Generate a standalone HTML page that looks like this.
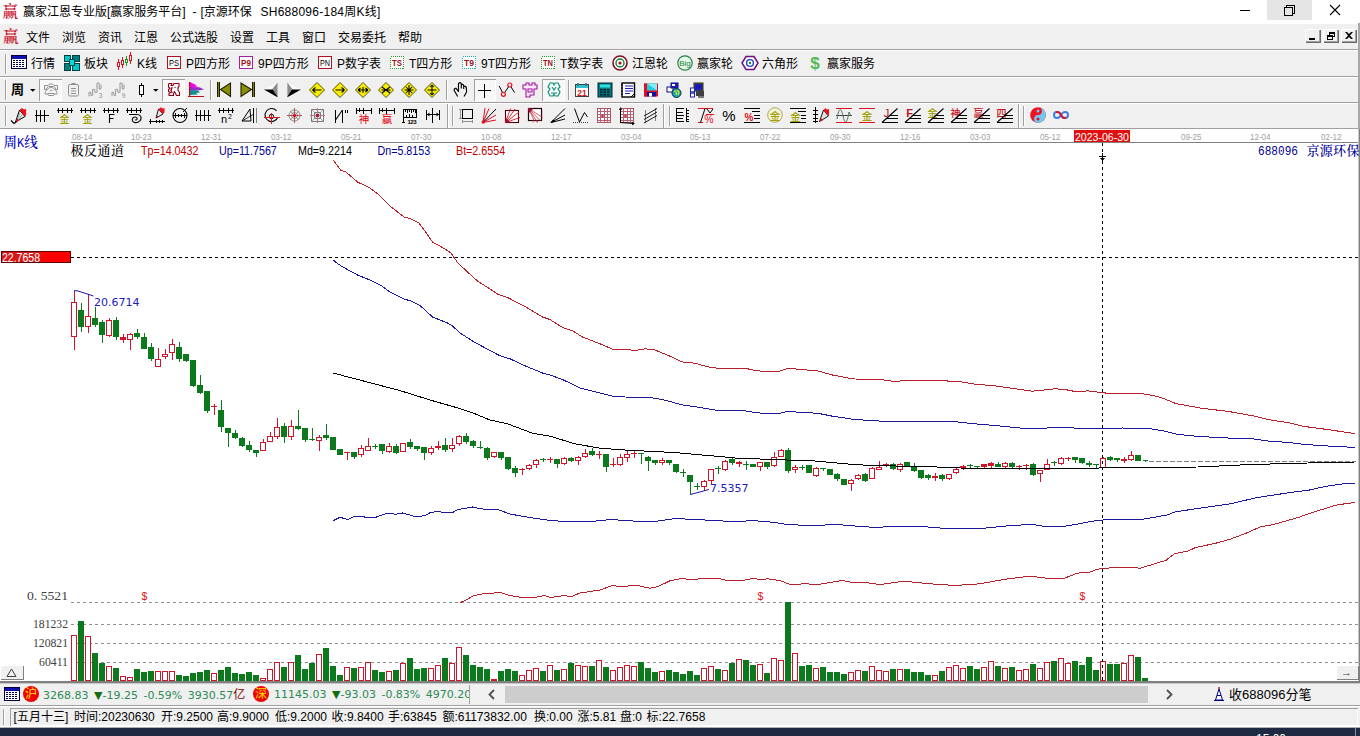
<!DOCTYPE html><html><head><meta charset="utf-8"><title>赢家江恩专业版</title><style>
html,body{margin:0;padding:0}
body{width:1360px;height:736px;overflow:hidden;background:#fff;position:relative;font-family:'Liberation Sans','Noto Sans CJK SC',sans-serif;font-size:12px;color:#000}
.a{position:absolute}
.t{position:absolute;white-space:nowrap;line-height:1}
.bar{position:absolute;left:0;width:1360px;background:#f0f0f0}
.ln{position:absolute;left:0;width:1360px;height:1px}
.ic{position:absolute;width:16px;height:16px;overflow:visible}
.grip{position:absolute;width:1px;background:#a0a0a0;box-shadow:1px 0 0 #fff}
.sep{position:absolute;width:1px;background:#a0a0a0;box-shadow:1px 0 0 #fff}
.pressed{position:absolute;background:#f8f8f8;box-shadow:inset 1px 1px 0 #a0a0a0,inset -1px -1px 0 #fff}

</style></head><body>
<div class="a" style="left:0;top:0;width:1360px;height:24px;background:#fff"></div>
<div class="t" style="left:2.5px;top:3px;font:600 15.5px/18px 'Liberation Serif','Noto Serif CJK SC',serif;color:#c8102a">赢</div>
<div class="t" id="title" style="left:23px;top:5px;font-size:12px;line-height:15px">赢家江恩专业版[赢家服务平台]<span class="t" style="left:169.500px;top:0;line-height:15px">-</span><span class="t" style="left:177.500px;top:0;line-height:15px">[京源环保</span><span class="t" id="t2" style="left:237.500px;top:0;line-height:15px;letter-spacing:0.25px">SH688096-184周K线]</span></div>
<div class="a" style="left:1267px;top:0;width:45px;height:20px;background:#e5e5e5"></div>
<svg class="a" style="left:1230px;top:0" width="130" height="22" viewBox="0 0 130 22"><g fill="none" stroke="#000" stroke-width="1" shape-rendering="crispEdges"><path d="M9.5 10.5h10"/><path d="M54.5 7.5h8v8h-8z M56.5 7.5v-2h8v8h-2"/></g><path d="M100 5l10 10M110 5l-10 10" stroke="#000" stroke-width="1.1" fill="none"/></svg>
<div class="bar" style="top:24px;height:25px"></div>
<div class="t" style="left:3px;top:28px;font:600 15.5px/18px 'Liberation Serif','Noto Serif CJK SC',serif;color:#c8102a">赢</div>
<div class="t" style="left:26px;top:31px;line-height:15px">文件</div>
<div class="t" style="left:62px;top:31px;line-height:15px">浏览</div>
<div class="t" style="left:98px;top:31px;line-height:15px">资讯</div>
<div class="t" style="left:134px;top:31px;line-height:15px">江恩</div>
<div class="t" style="left:170px;top:31px;line-height:15px">公式选股</div>
<div class="t" style="left:230px;top:31px;line-height:15px">设置</div>
<div class="t" style="left:266px;top:31px;line-height:15px">工具</div>
<div class="t" style="left:302px;top:31px;line-height:15px">窗口</div>
<div class="t" style="left:338px;top:31px;line-height:15px">交易委托</div>
<div class="t" style="left:398px;top:31px;line-height:15px">帮助</div>
<div class="a" style="left:1305px;top:29px;width:16px;height:14px;background:#f0f0f0;box-shadow:inset 1px 1px 0 #fff,inset -1px -1px 0 #696969,inset -2px -2px 0 #a0a0a0"></div>
<div class="a" style="left:1323px;top:29px;width:16px;height:14px;background:#f0f0f0;box-shadow:inset 1px 1px 0 #fff,inset -1px -1px 0 #696969,inset -2px -2px 0 #a0a0a0"></div>
<div class="a" style="left:1341px;top:29px;width:16px;height:14px;background:#f0f0f0;box-shadow:inset 1px 1px 0 #fff,inset -1px -1px 0 #696969,inset -2px -2px 0 #a0a0a0"></div>
<svg class="a" style="left:1305px;top:29px" width="52" height="14" viewBox="0 0 52 14" shape-rendering="crispEdges"><path d="M4 9h6v2h-6z" fill="#000"/><g fill="none" stroke="#000"><path d="M24.5 3.5h5v4h-5z M24 4.5h6"/><path d="M22.5 6.5h5v4h-5z M22 7.5h6" /></g><path d="M22.5 6.5h5v4h-5z" fill="#f0f0f0" stroke="#000"/><path d="M22 7.5h6" stroke="#000"/><path d="M40 3h2l2 2l2-2h2l-3 3.5l3 3.5h-2l-2-2l-2 2h-2l3-3.5z" fill="#000" shape-rendering="auto"/></svg>
<div class="ln" style="top:49px;background:#a0a0a0"></div><div class="ln" style="top:50px;background:#fff"></div>
<div class="bar" style="top:51px;height:25px"></div>
<div class="grip" style="left:5px;top:54px;height:20px"></div>
<svg class="ic" style="left:11px;top:55px" viewBox="0 0 16 16"><rect x="0.5" y="0.5" width="15" height="13" fill="#fff" stroke="#000040" shape-rendering="crispEdges"/><rect x="1" y="1" width="14" height="3" fill="#1010b0" shape-rendering="crispEdges"/><g fill="#000040" shape-rendering="crispEdges"><rect x="2" y="5" width="2" height="1"/><rect x="5" y="5" width="2" height="1"/><rect x="8" y="5" width="2" height="1"/><rect x="11" y="5" width="2" height="1"/><rect x="2" y="7" width="2" height="1"/><rect x="5" y="7" width="2" height="1"/><rect x="8" y="7" width="2" height="1"/><rect x="11" y="7" width="2" height="1"/><rect x="2" y="9" width="2" height="1"/><rect x="5" y="9" width="2" height="1"/><rect x="8" y="9" width="2" height="1"/><rect x="11" y="9" width="2" height="1"/><rect x="2" y="11" width="2" height="1"/><rect x="5" y="11" width="2" height="1"/><rect x="8" y="11" width="2" height="1"/><rect x="11" y="11" width="2" height="1"/></g></svg>
<div class="t" style="left:31px;top:57px;line-height:15px">行情</div>
<svg class="ic" style="left:64px;top:55px" viewBox="0 0 16 16"><g shape-rendering="crispEdges"><rect x="0.5" y="0.5" width="6" height="6" fill="#00c8c8" stroke="#004040"/><rect x="8.5" y="0.5" width="7" height="6" fill="#008080" stroke="#004040"/><rect x="0.5" y="8.5" width="6" height="7" fill="#008080" stroke="#004040"/><rect x="8.5" y="8.5" width="7" height="7" fill="#00c8c8" stroke="#004040"/><rect x="5" y="4" width="5" height="6" fill="#00e0e0" stroke="#004040"/></g></svg>
<div class="t" style="left:84px;top:57px;line-height:15px">板块</div>
<svg class="ic" style="left:116px;top:55px" viewBox="0 0 16 16"><g shape-rendering="crispEdges"><rect x="2" y="4" width="1" height="11" fill="#e01020"/><rect x="1.5" y="7.5" width="2" height="4" fill="#fff" stroke="#e01020"/><rect x="6" y="2" width="1" height="11" fill="#e01020"/><rect x="5.5" y="5.5" width="2" height="4" fill="#fff" stroke="#e01020"/><rect x="10" y="1" width="1" height="10" fill="#10a020"/><rect x="9.5" y="4.5" width="2" height="3" fill="#fff" stroke="#10a020"/><rect x="14" y="-3" width="1" height="12" fill="#e01020"/><rect x="13.5" y="0.5" width="2" height="5" fill="#fff" stroke="#e01020"/></g></svg>
<div class="t" style="left:137px;top:57px;line-height:15px">K线</div>
<svg class="ic" style="left:167px;top:55px" viewBox="0 0 16 16"><rect x="0.5" y="1.5" width="13" height="12" fill="#fff" stroke="#b01020" shape-rendering="crispEdges"/><text x="7" y="11" text-anchor="middle" font-family='"Liberation Sans","Noto Sans CJK SC",sans-serif' font-size="9.500" fill="#000" textLength="10" lengthAdjust="spacingAndGlyphs">PS</text></svg>
<div class="t" style="left:186px;top:57px;line-height:15px">P四方形</div>
<svg class="ic" style="left:239px;top:55px" viewBox="0 0 16 16"><rect x="0.5" y="1.5" width="13" height="12" fill="#fff" stroke="#a020a0" shape-rendering="crispEdges"/><text x="7" y="11" text-anchor="middle" font-family='"Liberation Sans","Noto Sans CJK SC",sans-serif' font-size="8.500" font-weight="bold" fill="#a01020" textLength="10" lengthAdjust="spacingAndGlyphs">P9</text></svg>
<div class="t" style="left:258px;top:57px;line-height:15px">9P四方形</div>
<svg class="ic" style="left:318px;top:55px" viewBox="0 0 16 16"><rect x="0.5" y="1.5" width="13" height="12" fill="#fff" stroke="#b01020" shape-rendering="crispEdges"/><text x="7" y="11" text-anchor="middle" font-family='"Liberation Sans","Noto Sans CJK SC",sans-serif' font-size="9.500" fill="#000" textLength="10" lengthAdjust="spacingAndGlyphs">PN</text></svg>
<div class="t" style="left:337px;top:57px;line-height:15px">P数字表</div>
<svg class="ic" style="left:390px;top:55px" viewBox="0 0 16 16"><rect x="0.5" y="1.5" width="13" height="12" fill="#fff" stroke="#20a020" stroke-dasharray="1 1" shape-rendering="crispEdges"/><text x="7" y="11" text-anchor="middle" font-family='"Liberation Sans","Noto Sans CJK SC",sans-serif' font-size="8.500" font-weight="bold" fill="#a01020" textLength="10" lengthAdjust="spacingAndGlyphs">TS</text></svg>
<div class="t" style="left:409px;top:57px;line-height:15px">T四方形</div>
<svg class="ic" style="left:462px;top:55px" viewBox="0 0 16 16"><rect x="0.5" y="1.5" width="13" height="12" fill="#fff" stroke="#20b0b0" stroke-dasharray="1 1" shape-rendering="crispEdges"/><text x="7" y="11" text-anchor="middle" font-family='"Liberation Sans","Noto Sans CJK SC",sans-serif' font-size="8.500" font-weight="bold" fill="#a01020" textLength="10" lengthAdjust="spacingAndGlyphs">T9</text></svg>
<div class="t" style="left:481px;top:57px;line-height:15px">9T四方形</div>
<svg class="ic" style="left:541px;top:55px" viewBox="0 0 16 16"><rect x="0.5" y="1.5" width="13" height="12" fill="#fff" stroke="#20a020" stroke-dasharray="1 1" shape-rendering="crispEdges"/><text x="7" y="11" text-anchor="middle" font-family='"Liberation Sans","Noto Sans CJK SC",sans-serif' font-size="8.500" font-weight="bold" fill="#a01020" textLength="10" lengthAdjust="spacingAndGlyphs">TN</text></svg>
<div class="t" style="left:560px;top:57px;line-height:15px">T数字表</div>
<svg class="ic" style="left:612px;top:55px" viewBox="0 0 16 16"><circle cx="8" cy="8" r="7" fill="#fff" stroke="#801020" stroke-width="1.6"/><circle cx="8" cy="8" r="4" fill="none" stroke="#108030" stroke-width="1.4"/><circle cx="8" cy="8" r="1.6" fill="#a01020"/></svg>
<div class="t" style="left:632px;top:57px;line-height:15px">江恩轮</div>
<svg class="ic" style="left:677px;top:55px" viewBox="0 0 16 16"><circle cx="8" cy="8" r="7.2" fill="#e8f8e8" stroke="#208040" stroke-width="1.2"/><text x="8" y="11" text-anchor="middle" font-family='"Liberation Sans","Noto Sans CJK SC",sans-serif' font-size="8" fill="#208040">Big</text></svg>
<div class="t" style="left:697px;top:57px;line-height:15px">赢家轮</div>
<svg class="ic" style="left:742px;top:55px" viewBox="0 0 16 16"><path d="M4 1.5h8l4 6.5l-4 6.5h-8l-4-6.5z" fill="#fff" stroke="#701080" stroke-width="1.5"/><circle cx="8" cy="8" r="3.4" fill="none" stroke="#2040c0" stroke-width="1.4"/><circle cx="8" cy="8" r="1.2" fill="#208040"/></svg>
<div class="t" style="left:762px;top:57px;line-height:15px">六角形</div>
<svg class="ic" style="left:807px;top:55px" viewBox="0 0 16 16"><text x="8" y="14" text-anchor="middle" font-family='"Liberation Sans","Noto Sans CJK SC",sans-serif' font-size="17" font-weight="bold" fill="#58b858">$</text></svg>
<div class="t" style="left:827px;top:57px;line-height:15px">赢家服务</div>
<div class="ln" style="top:76px;background:#a0a0a0"></div><div class="ln" style="top:77px;background:#fff"></div>
<div class="bar" style="top:78px;height:24px"></div>
<div class="grip" style="left:5px;top:80px;height:20px"></div>
<div class="t" style="left:11px;top:82px;font:bold 13px/16px 'Liberation Sans','Noto Sans CJK SC',sans-serif">周</div>
<svg class="a" style="left:30px;top:89px" width="6" height="4"><path d="M0 0h5.500l-2.750 2.750z" fill="#000"/></svg>
<div class="pressed" style="left:39px;top:79px;width:23px;height:22px"></div>
<div class="pressed" style="left:162px;top:79px;width:23px;height:22px"></div>
<div class="pressed" style="left:474px;top:79px;width:22px;height:22px"></div>
<div class="pressed" style="left:542px;top:79px;width:23px;height:22px"></div>
<svg class="a" style="left:153px;top:89px" width="6" height="4"><path d="M0 0h5.500l-2.750 2.750z" fill="#000"/></svg>
<svg class="ic" style="left:43px;top:82px" viewBox="0 0 16 16"><path d="M1.500 3.500h3.500l1.500-1.500h3l1.500 1.500h3.500v4h-2v-1.500l-2-1.500h-5l-2 1.500v1.500h-2z M5 7c1-2 5-2 6 0c2 1 3 3 3 5h-2.500l-1 1.500h-5l-1-1.500h-2.500c0-2 1-4 3-5z M6.500 9c1-1 2-1 3 0M4.500 11.500h7" fill="none" stroke="#909090" stroke-width="1"/></svg>
<svg class="ic" style="left:65px;top:82px" viewBox="0 0 16 16"><rect x="3.500" y="2.500" width="10" height="11.500" rx="1.500" fill="none" stroke="#909090"/><path d="M6.500 2h4v-1h-4z" fill="#909090"/><path d="M6 6.500h5M6 9h5M6 11.500h5" stroke="#909090"/></svg>
<svg class="ic" style="left:87px;top:82px" viewBox="0 0 16 16"><polyline points="2,14.400 2,10.300 3.800,10.300 3.800,13.300 5.600,13.300 5.600,7.400 7.800,7.400 7.800,10.300 10,10.300 10,1.100 12.200,1.100 12.200,7 14,7 14,2.600" fill="none" stroke="#999" stroke-width="1"/><text x="13.500" y="16" text-anchor="middle" font-family='"Liberation Sans","Noto Sans CJK SC",sans-serif' font-size="6.500" fill="#909090">3</text></svg>
<svg class="ic" style="left:110px;top:82px" viewBox="0 0 16 16"><polyline points="2,14.400 2,10.300 3.800,10.300 3.800,13.300 5.600,13.300 5.600,7.400 7.800,7.400 7.800,10.300 10,10.300 10,1.100 12.200,1.100 12.200,7 14,7 14,2.600" fill="none" stroke="#999" stroke-width="1"/><text x="13.500" y="16" text-anchor="middle" font-family='"Liberation Sans","Noto Sans CJK SC",sans-serif' font-size="6.500" fill="#909090">9</text></svg>
<svg class="ic" style="left:134px;top:82px" viewBox="0 0 16 16"><g shape-rendering="crispEdges"><rect x="7" y="1" width="1" height="14" fill="#000"/><rect x="5.500" y="3.500" width="4" height="9" fill="#fff" stroke="#000" stroke-width="1"/></g></svg>
<svg class="ic" style="left:165px;top:82px" viewBox="0 0 16 16"><path d="M4 1.500h3l-1 2h2l1-2h5v3l-1 1v3l1.500 2v3h-3l-1-2l-1-2l-1 2v2h-4.500v-2l1.500-1l-2-1v-2l1.500-1l-1.500-1.500v-2z" fill="#fff" stroke="#900018" stroke-width="1.100" stroke-linejoin="round"/><path d="M7 5.500l-1 3l1 2M10 5.500v.1" fill="none" stroke="#900018" stroke-width="1.300" stroke-linecap="round"/></svg>
<svg class="ic" style="left:188px;top:82px" viewBox="0 0 16 16"><path d="M2 0L9 3.500L7 4L12 5.500L2 6z" fill="#ff00e0"/><path d="M2 5L12 5.500L16 7.500L10 8.500L2 9z" fill="#9030c8"/><path d="M2 8.500L10 8.500L12 10.500L8 11L10 12.500L2 13z" fill="#109090"/><path d="M1.600 0V15M0 14.500H16" stroke="#c01020" stroke-width="1.200" fill="none"/></svg>
<svg class="ic" style="left:216px;top:82px" viewBox="0 0 16 16"><rect x="1" y="0" width="3" height="15" fill="#202000"/><rect x="2" y="0" width="1" height="15" fill="#808000"/><path d="M14.500 1v13.500L4.500 7.500z" fill="#8c8c08" stroke="#202000" stroke-width="1.100"/></svg>
<svg class="ic" style="left:239px;top:82px" viewBox="0 0 16 16"><rect x="13" y="0" width="3" height="15" fill="#202000"/><rect x="14" y="0" width="1" height="15" fill="#808000"/><path d="M2 1v13.500L12.500 7.500z" fill="#8c8c08" stroke="#202000" stroke-width="1.100"/></svg>
<svg class="ic" style="left:263px;top:82px" viewBox="0 0 16 16"><path d="M0.900 7.400L14.500 .4L9 7.400z" fill="#fafafa"/><path d="M9 7.400L14.500 .4V14.400z" fill="#8c8c8c"/><path d="M0.900 7.400H9.500L14.500 14.400v.8z" fill="#000"/></svg>
<svg class="ic" style="left:286px;top:82px" viewBox="0 0 16 16"><path d="M15 7.400L1.400 .4L6.600 7.400z" fill="#fafafa"/><path d="M6.600 7.400L1.400 .4V14.400z" fill="#8c8c8c"/><path d="M15 7.400H6L1.400 14.400v.8z" fill="#000"/></svg>
<svg class="ic" style="left:309px;top:82px" viewBox="0 0 16 16"><path d="M8 .5L15.500 8L8 15.500L.5 8z" fill="#f8f000" stroke="#404000" stroke-width=".9"/><path d="M3.500 8h9M3.500 8l3-2.500M3.500 8l3 2.500" stroke="#000" stroke-width="1.050" fill="none"/></svg>
<svg class="ic" style="left:332px;top:82px" viewBox="0 0 16 16"><path d="M8 .5L15.500 8L8 15.500L.5 8z" fill="#f8f000" stroke="#404000" stroke-width=".9"/><path d="M3.500 8h9M12.500 8l-3-2.500M12.500 8l-3 2.500" stroke="#000" stroke-width="1.050" fill="none"/></svg>
<svg class="ic" style="left:355px;top:82px" viewBox="0 0 16 16"><path d="M8 .5L15.500 8L8 15.500L.5 8z" fill="#f8f000" stroke="#404000" stroke-width=".9"/><path d="M3 8h10M3 8l2.500-2M3 8l2.500 2M13 8l-2.500-2M13 8l-2.500 2M8 5v6" stroke="#000" stroke-width="1.050" fill="none"/></svg>
<svg class="ic" style="left:378px;top:82px" viewBox="0 0 16 16"><path d="M8 .5L15.500 8L8 15.500L.5 8z" fill="#f8f000" stroke="#404000" stroke-width=".9"/><path d="M4 5l8 6M4 11l8-6M3.500 8h9" stroke="#000" stroke-width="1.050" fill="none"/></svg>
<svg class="ic" style="left:401px;top:82px" viewBox="0 0 16 16"><path d="M8 .5L15.500 8L8 15.500L.5 8z" fill="#f8f000" stroke="#404000" stroke-width=".9"/><path d="M8 3v10M3.500 8h9M5 5l6 6M5 11l6-6" stroke="#000" stroke-width="1.050" fill="none"/></svg>
<svg class="ic" style="left:424px;top:82px" viewBox="0 0 16 16"><path d="M8 .5L15.500 8L8 15.500L.5 8z" fill="#f8f000" stroke="#404000" stroke-width=".9"/><path d="M8 3v10M3.500 8h9M8 3l-2 2M8 3l2 2M8 13l-2-2M8 13l2-2" stroke="#000" stroke-width="1.050" fill="none"/></svg>
<svg class="ic" style="left:453px;top:82px" viewBox="0 0 16 16"><path d="M4.700 14.500L1.200 8.500V7L2.900 6.200L5.500 9.500V1.500L7 .5L8.300 1.500V6.500M8.300 3L9.500 2.300L10.700 3.300V7M10.700 4.700L12 4.200L13.300 5.300L13.600 10L11 14.500" fill="none" stroke="#000" stroke-width="1.150" stroke-linejoin="round"/></svg>
<svg class="ic" style="left:477px;top:82px" viewBox="0 0 16 16"><path d="M7.500 2v14M1 8.500h13" stroke="#000" stroke-width="1" shape-rendering="crispEdges"/></svg>
<svg class="ic" style="left:499px;top:82px" viewBox="0 0 16 16"><path d="M.2 4l4.200 8.300l6.400-9.300l4.800 7.600" fill="none" stroke="#000" stroke-width="1"/><circle cx="4.400" cy="12.300" r="2" fill="#f0f0f0" stroke="#e01020" stroke-width="1.200"/><circle cx="10.800" cy="3" r="2" fill="#f0f0f0" stroke="#e01020" stroke-width="1.200"/></svg>
<svg class="ic" style="left:522px;top:82px" viewBox="0 0 16 16"><path d="M1 3h3v-2h3v2h3v-2h3v2h2v4h-3v6h-4v2h-4v-8h-3z M6 7h4v3h-4z" fill="#fbe8fb" stroke="#a010a0" stroke-width="1.050"/></svg>
<svg class="ic" style="left:546px;top:82px" viewBox="0 0 16 16"><path d="M4 1h3l1 2l1-2h3l2 4l-2 2l2 3l-2 4h-3l-1-2l-1 2h-3l-2-4l2-3l-2-2z M6 5l2 3l2-3M5 11h6" fill="none" stroke="#109080" stroke-width="1.200"/></svg>
<svg class="ic" style="left:574px;top:82px" viewBox="0 0 16 16"><rect x="1.500" y="2.500" width="13" height="12" fill="#fff" stroke="#404040"/><rect x="2" y="3" width="12" height="3" fill="#30c0d0"/><path d="M4 1v3M12 1v3" stroke="#208090" stroke-width="1.500"/><text x="8" y="13.500" text-anchor="middle" font-family='"Liberation Sans","Noto Sans CJK SC",sans-serif' font-size="8.500" font-weight="bold" fill="#d02020">21</text></svg>
<svg class="ic" style="left:597px;top:82px" viewBox="0 0 16 16"><rect x="1" y="1" width="14" height="14" fill="#087880" stroke="#002030"/><rect x="3" y="2.500" width="10" height="3" fill="#30e0e0"/><g fill="#002030"><rect x="3" y="7" width="2.500" height="1.600"/><rect x="6.5" y="7" width="2.500" height="1.600"/><rect x="10" y="7" width="2.500" height="1.600"/><rect x="3" y="9.5" width="2.500" height="1.600"/><rect x="6.5" y="9.5" width="2.500" height="1.600"/><rect x="10" y="9.5" width="2.500" height="1.600"/><rect x="3" y="12" width="2.500" height="1.600"/><rect x="6.5" y="12" width="2.500" height="1.600"/><rect x="10" y="12" width="2.500" height="1.600"/></g></svg>
<svg class="ic" style="left:620px;top:82px" viewBox="0 0 16 16"><rect x="2" y="1" width="12.500" height="14" fill="#fff" stroke="#000" stroke-width="1.400"/><path d="M5 4h8M5 6.500h8M5 9h8M5 11.500h5" stroke="#2020c0" stroke-width="1.100"/><path d="M1 3h2M1 6h2M1 9h2M1 12h2" stroke="#000"/><path d="M11 15l3.500-3.500" stroke="#000"/></svg>
<svg class="ic" style="left:643px;top:82px" viewBox="0 0 16 16"><rect x="1" y="1.500" width="14" height="13" fill="#e01020"/><rect x="4" y="1.500" width="10" height="7" fill="#20d0e0"/><path d="M4 1.500l10 7v-7z" fill="#80f0f0"/><rect x="1" y="1.500" width="3" height="13" fill="#e01020"/><rect x="4" y="10" width="9" height="4.500" fill="#1010a0"/><rect x="6" y="11" width="3" height="3.500" fill="#fff"/></svg>
<svg class="ic" style="left:666px;top:82px" viewBox="0 0 16 16"><rect x="1" y="5" width="6" height="5" fill="#fff" stroke="#101080"/><rect x="5" y="1" width="7" height="5" fill="#2020c0" stroke="#101080"/><rect x="6" y="2" width="3" height="2" fill="#fff"/><circle cx="10.500" cy="11" r="4.500" fill="#20a0c0" stroke="#003040"/><path d="M8 9c2 0 3 2 2 4M11 8l2 2l-1 3" fill="none" stroke="#c0e020" stroke-width="1.400"/></svg>
<svg class="ic" style="left:689px;top:82px" viewBox="0 0 16 16"><rect x="5" y="1" width="9" height="8" fill="#2020c0" stroke="#505000" stroke-width="1.200"/><rect x="6.500" y="2.500" width="6" height="4" fill="#1818b0"/><rect x="7" y="9" width="8" height="5" fill="#404040"/><rect x="1.500" y="6" width="4" height="9" fill="#fff" stroke="#2020a0"/><rect x="2" y="9" width="3" height="3" fill="#4060e0"/><path d="M9 15h6" stroke="#000"/></svg>
<div class="sep" style="left:210px;top:80px;height:20px"></div>
<div class="sep" style="left:446px;top:80px;height:20px"></div>
<div class="sep" style="left:568px;top:80px;height:20px"></div>
<div class="ln" style="top:102px;background:#a0a0a0"></div><div class="ln" style="top:103px;background:#fff"></div>
<div class="bar" style="top:104px;height:24px"></div>
<div class="grip" style="left:5px;top:106px;height:20px"></div>
<svg class="ic" style="left:11px;top:107px" viewBox="0 0 16 16"><path d="M8.500 3L14 9.500L4.500 15z" fill="#e8e8e8" stroke="#000" stroke-width="1"/><path d="M9 6l-2.500 6M11 7.500l-3.500 5.500" stroke="#70a090" stroke-width=".8"/><path d="M8.500 3L11 1L13 2.500L15 2L15.200 8L14 9.500z" fill="#f01020"/><path d="M4.500 15l1.800-3.500l2 2z" fill="#d01020"/><path d="M0 13.500l3 3l2.500-1.800" fill="none" stroke="#000" stroke-width="1.200"/></svg>
<svg class="ic" style="left:34px;top:107px" viewBox="0 0 16 16"><path d="M1 8.500h14M2.500 3v12M6.500 3v12M10.500 3v12" stroke="#000" stroke-width="1" fill="none" shape-rendering="crispEdges"/></svg>
<svg class="ic" style="left:57px;top:107px" viewBox="0 0 16 16"><path d="M0 3.500h16M1.500 1v5M5.500 1v5M10.500 1v5M14.500 1v5" stroke="#000" stroke-width="1" shape-rendering="crispEdges"/><text x="7.500" y="16" text-anchor="middle" font-family='"Liberation Sans","Noto Sans CJK SC",sans-serif' font-size="10" font-weight="500" fill="#a0a000">金</text></svg>
<svg class="ic" style="left:80px;top:107px" viewBox="0 0 16 16"><path d="M0 3.500h16M1.500 1v5M5.500 1v5M10.500 1v5M14.500 1v5" stroke="#000" stroke-width="1" shape-rendering="crispEdges"/><text x="7.500" y="16" text-anchor="middle" font-family='"Liberation Sans","Noto Sans CJK SC",sans-serif' font-size="10" font-weight="500" fill="#a0a000">金</text></svg>
<svg class="ic" style="left:103px;top:107px" viewBox="0 0 16 16"><path d="M0 3.500h16M1.500 1v5M5.500 1v5M10.500 1v5M14.500 1v5" stroke="#000" stroke-width="1" shape-rendering="crispEdges"/><path d="M6.500 16v-8.500h5M6.500 11.500h4" stroke="#000" stroke-width="1.100" fill="none"/></svg>
<svg class="ic" style="left:126px;top:107px" viewBox="0 0 16 16"><path d="M0 3.500h16M1.500 1v5M5.500 1v5M10.500 1v5M14.500 1v5" stroke="#000" stroke-width="1" shape-rendering="crispEdges"/><path d="M3 7.500h8c3.500 0 4.500 2.500 4 4.500c-.7 3-5 4.500-7.500 3c-2-1.300-1.500-4 .5-4.800c2-.7 3.500 .5 3 2c-.4 1-1.500 1-2 .5" fill="none" stroke="#000" stroke-width="1.100"/></svg>
<svg class="ic" style="left:149px;top:107px" viewBox="0 0 16 16"><path d="M9.500 2L14 7L7 11z" fill="#e8e8e8" stroke="#000" stroke-width=".9"/><path d="M9.500 2L12 .3L13.500 1.500L15.500 1L15.500 5.500L14 7z" fill="#f01020"/><path d="M7 11l1.300-2.600l1.500 1.500z" fill="#d01020"/><path d="M0 14.500h16M1.500 12v5M7.500 13v3M10.500 13v3M13.500 13v3" stroke="#000" stroke-width="1" shape-rendering="crispEdges"/></svg>
<svg class="ic" style="left:172px;top:107px" viewBox="0 0 16 16"><circle cx="8" cy="8.500" r="7" fill="none" stroke="#000" stroke-width="1.100"/><path d="M1 8.500h14M3.500 6v5M6.500 7v3M9.500 7v3M12.500 6v5" stroke="#000" shape-rendering="crispEdges"/><path d="M11 5l4-4" stroke="#000"/></svg>
<svg class="ic" style="left:195px;top:107px" viewBox="0 0 16 16"><path d="M0 8.500h16M1.500 3v11M5.500 3v11M9.500 3v11M13.500 3v11" stroke="#000" stroke-width="1" fill="none" shape-rendering="crispEdges"/></svg>
<svg class="ic" style="left:218px;top:107px" viewBox="0 0 16 16"><path d="M0 3.500h16M1.500 1v5M5.500 1v5M10.500 1v5M14.500 1v5" stroke="#000" stroke-width="1" shape-rendering="crispEdges"/><text x="6" y="16" text-anchor="middle" font-family='"Liberation Sans","Noto Sans CJK SC",sans-serif' font-size="11" fill="#000">n</text><text x="12" y="12" text-anchor="middle" font-family='"Liberation Sans","Noto Sans CJK SC",sans-serif' font-size="7" fill="#000">2</text></svg>
<svg class="ic" style="left:241px;top:107px" viewBox="0 0 16 16"><path d="M1 14L9 2l1 12z" fill="none" stroke="#000"/><path d="M12.500 1v15" stroke="#000" shape-rendering="crispEdges"/><path d="M15.500 1v15" stroke="#808080" shape-rendering="crispEdges"/><path d="M1 14l12-7" stroke="#000" stroke-width=".8"/></svg>
<svg class="ic" style="left:264px;top:107px" viewBox="0 0 16 16"><path d="M12.500 3.800A6.500 6.500 0 1 0 13.800 10" fill="none" stroke="#000" stroke-width="1.100"/><circle cx="7.500" cy="9.500" r="2.200" fill="none" stroke="#000" stroke-width="1"/><path d="M0 10.500h16M7.500 6v11" stroke="#e01020" stroke-width="1" shape-rendering="crispEdges"/></svg>
<svg class="ic" style="left:287px;top:107px" viewBox="0 0 16 16"><circle cx="7.500" cy="8.500" r="5.500" fill="none" stroke="#508868" stroke-width=".8"/><circle cx="7.500" cy="8.500" r="3" fill="none" stroke="#508868" stroke-width=".8"/><path d="M0 8.500h15M7.500 1v15" stroke="#d04858" stroke-width="1" shape-rendering="crispEdges"/><path d="M3 4l9 9M3 13l9-9" stroke="#c06070" stroke-width=".7"/><circle cx="7.500" cy="8.500" r="1.600" fill="#d01030"/></svg>
<svg class="ic" style="left:310px;top:107px" viewBox="0 0 16 16"><rect x="1.500" y="2.500" width="12" height="12" fill="none" stroke="#708078" stroke-width="1" shape-rendering="crispEdges"/><rect x="4.500" y="5.500" width="6" height="6" fill="none" stroke="#708078" stroke-width="1" shape-rendering="crispEdges"/><path d="M0 8.500h15M7.500 1v15" stroke="#c07080" stroke-width="1" shape-rendering="crispEdges"/><path d="M1 2l13 13M1 15l13-13" stroke="#a09090" stroke-width=".7"/><rect x="6" y="7" width="3" height="3" fill="#a02040"/></svg>
<svg class="ic" style="left:333px;top:107px" viewBox="0 0 16 16"><path d="M2.500 2.500v13M9.500 2.500v13" stroke="#000" stroke-width="1" shape-rendering="crispEdges"/><path d="M2.500 13L9.500 3" stroke="#000" stroke-width="1.100"/><path d="M12.500 2.500v3M14.500 2.500v3" stroke="#000" stroke-width="1" shape-rendering="crispEdges"/></svg>
<svg class="ic" style="left:356px;top:107px" viewBox="0 0 16 16"><path d="M0 3.500h16M0.500 1v6M3.500 1v4M7.500 1v6M15.500 1v6" stroke="#000" stroke-width="1" shape-rendering="crispEdges"/><text x="8" y="16.300" text-anchor="middle" font-family='"Liberation Sans","Noto Sans CJK SC",sans-serif' font-size="10.500" fill="#e00010">神</text></svg>
<svg class="ic" style="left:379px;top:107px" viewBox="0 0 16 16"><path d="M0 3.500h16M0.500 1v6M3.500 1v4M7.500 1v6M15.500 1v6" stroke="#000" stroke-width="1" shape-rendering="crispEdges"/><text x="8" y="16.300" text-anchor="middle" font-family='"Liberation Sans","Noto Sans CJK SC",sans-serif' font-size="10.500" fill="#e00010">赢</text></svg>
<svg class="ic" style="left:402px;top:107px" viewBox="0 0 16 16"><path d="M1 2.500h14M1 10.500h14M1.500 2v14M14.500 2v9M3.500 3v2M5.500 3v3M7.500 3v2M9.500 3v3M11.500 3v2M13.500 3v3M4.500 8v2M7.500 7v3M10.500 8v2M0 15.500h3" stroke="#000" stroke-width="1" shape-rendering="crispEdges" fill="none"/><text x="10" y="16.500" text-anchor="middle" font-family='"Liberation Sans","Noto Sans CJK SC",sans-serif' font-size="6" font-weight="bold" fill="#000" textLength="9">123</text></svg>
<svg class="ic" style="left:425px;top:107px" viewBox="0 0 16 16"><path d="M1.500 3v10M14.500 3v10M7.500 1v15M2 7.500h12" stroke="#000" stroke-width="1" shape-rendering="crispEdges"/><path d="M2 7.500l2.500-2v4zM14 7.500l-2.500-2v4z" fill="#000"/></svg>
<div class="sep" style="left:447px;top:104px;height:24px"></div>
<div class="grip" style="left:452px;top:106px;height:20px"></div>
<svg class="ic" style="left:458px;top:107px" viewBox="0 0 16 16"><rect x="4.500" y="2.500" width="10" height="9" fill="none" stroke="#000" stroke-width="1" shape-rendering="crispEdges"/><path d="M2.500 2v10M1 2.500h3M1 11.500h3M4 14.500h11M4.500 13v3M14.500 13v3" stroke="#909090" shape-rendering="crispEdges"/></svg>
<svg class="ic" style="left:481px;top:107px" viewBox="0 0 16 16"><path d="M2 15.500L4 1M2 15.500L8 1.500M2 15.500L15 8M2 15.500L15 13" stroke="#e01020" stroke-width="1"/><path d="M2 15.500L15 2" stroke="#000" stroke-width="1"/><circle cx="2.300" cy="15" r="1.700" fill="#e01020"/></svg>
<svg class="ic" style="left:504px;top:107px" viewBox="0 0 16 16"><rect x="1.500" y="3.500" width="13" height="12" fill="#fff" stroke="#500010" stroke-width="1.100"/><path d="M1.500 15.500l5-14M1.500 15.500l9.500-13.500M1.500 15.500l13.500-10.500M1.500 15.500l14.500-5" stroke="#e01020" stroke-width=".9"/><path d="M1.500 15.500v-5l5 5z" fill="#a01030"/></svg>
<svg class="ic" style="left:527px;top:107px" viewBox="0 0 16 16"><rect x="1.500" y="1.500" width="13" height="12" fill="#fff" stroke="#200008" stroke-width="1.200"/><path d="M1.500 1.500l9 14M1.500 1.500l12 12.500M1.500 1.500l14 9M1.500 1.500l6 13" stroke="#c03040" stroke-width=".8"/><path d="M14.500 5h1.500M14.500 9h1.500M6 13.500v2M10 13.500v2" stroke="#c03040" stroke-width=".8" stroke-dasharray="1 .6"/><path d="M1.500 1.500h5l-5 5z" fill="#a01030"/></svg>
<svg class="ic" style="left:550px;top:107px" viewBox="0 0 16 16"><path d="M1 15.500L15 1.500M1 15.500l14-7.500M1 15.500l14-3.500" stroke="#000" stroke-width="1"/><path d="M.5 16l4.500-1.500l-2-2z" fill="#000"/></svg>
<svg class="ic" style="left:573px;top:107px" viewBox="0 0 16 16"><path d="M1.500 1.500l5 13.500l5-9.500l3 4.500" fill="none" stroke="#000" stroke-width="1"/><path d="M0 15.500h16" stroke="#404040" stroke-dasharray="1 1"/></svg>
<svg class="ic" style="left:596px;top:107px" viewBox="0 0 16 16"><rect x="1.500" y="1.500" width="13" height="14" fill="#fff" stroke="#a85060" stroke-width="1" shape-rendering="crispEdges"/><path d="M1 4.500h14M1 7.500h14M1 10.500h14M1 13.500h14M4.500 1v15M8.500 1v15M11.500 1v15" stroke="#b86070" stroke-width="1" shape-rendering="crispEdges"/><circle cx="6.500" cy="9" r="1.300" fill="#c03048"/></svg>
<svg class="ic" style="left:619px;top:107px" viewBox="0 0 16 16"><rect x="1.500" y="1.500" width="13" height="14" fill="#fff" stroke="#a85060" stroke-width="1" shape-rendering="crispEdges"/><path d="M1 4.500h14M1 7.500h14M1 10.500h14M1 13.500h14M4.500 1v15M8.500 1v15M11.500 1v15" stroke="#b86070" stroke-width="1" shape-rendering="crispEdges"/><circle cx="6.500" cy="9" r="1.300" fill="#c03048"/><path d="M1.500 1v15" stroke="#000" stroke-width="1" shape-rendering="crispEdges"/><path d="M1 15.500l14 1" stroke="#000" stroke-width="1.100" fill="none"/><path d="M1.500 0l-1.500 3h3zM16 16.700l-3-2v3.500z" fill="#000"/></svg>
<svg class="ic" style="left:642px;top:107px" viewBox="0 0 16 16"><path d="M3.500 3v13M13.500 1v13" stroke="#808080" shape-rendering="crispEdges"/><path d="M2 9L15 1.500M2 12.500L15 5M2 16L15 8.500" stroke="#000" stroke-width=".9"/></svg>
<div class="sep" style="left:663px;top:104px;height:24px"></div>
<div class="grip" style="left:669px;top:106px;height:20px"></div>
<svg class="ic" style="left:675px;top:107px" viewBox="0 0 16 16"><path d="M1.500 1v14M1 1.500h8M1 5.500h7M1 8.500h8M1 11.500h7M1 14.500h8M11.500 1v14" stroke="#000" stroke-width="1" shape-rendering="crispEdges"/><path d="M12 3h2M12 6h2M12 9h2M12 12h2M12 14.500h2" stroke="#000" shape-rendering="crispEdges"/></svg>
<svg class="ic" style="left:698px;top:107px" viewBox="0 0 16 16"><path d="M0 1.500h15" stroke="#e01020" stroke-width="1" shape-rendering="crispEdges"/><path d="M0 15.500h5M8 7.500h8" stroke="#e01020" stroke-width="1" shape-rendering="crispEdges"/><path d="M2.500 15.500L7 1.500M8.500 1.500l3.500 4.500l3-4" fill="none" stroke="#000" stroke-width="1"/><text x="11" y="16" text-anchor="middle" font-family='"Liberation Sans","Noto Sans CJK SC",sans-serif' font-size="10.500" fill="#e01020">%</text></svg>
<svg class="ic" style="left:721px;top:107px" viewBox="0 0 16 16"><text x="8" y="14" text-anchor="middle" font-family='"Liberation Sans","Noto Sans CJK SC",sans-serif' font-size="15" fill="#000">%</text></svg>
<svg class="ic" style="left:744px;top:107px" viewBox="0 0 16 16"><path d="M0 1.500h16M8 4.500h8M10 8.500h6M10 11.500h6M0 15.500h16" stroke="#000" stroke-width="1.100" shape-rendering="crispEdges"/><path d="M0 15.500h16" stroke="#000"/><text x="5" y="13.500" text-anchor="middle" font-family='"Liberation Sans","Noto Sans CJK SC",sans-serif' font-size="10" font-weight="bold" fill="#e01020">%</text></svg>
<svg class="ic" style="left:767px;top:107px" viewBox="0 0 16 16"><circle cx="8" cy="8" r="7.300" fill="#f4f4d8" stroke="#b0a860" stroke-width="1"/><text x="8" y="12.500" text-anchor="middle" font-family='"Liberation Sans","Noto Sans CJK SC",sans-serif' font-size="10.500" font-weight="500" fill="#a0a000">金</text></svg>
<svg class="ic" style="left:790px;top:107px" viewBox="0 0 16 16"><path d="M0 1.500h16M8 4.500h8M11 8.500h5M11 11.500h5M0 15.500h16" stroke="#000" stroke-width="1.100" shape-rendering="crispEdges"/><text x="5.500" y="14" text-anchor="middle" font-family='"Liberation Sans","Noto Sans CJK SC",sans-serif' font-size="10.500" font-weight="500" fill="#a0a000">金</text></svg>
<svg class="ic" style="left:813px;top:107px" viewBox="0 0 16 16"><path d="M2.500 0v16M0 3.500h5M0 7.500h5M0 11.500h5M0 14.500h5" stroke="#000" stroke-width="1" shape-rendering="crispEdges"/><path d="M10.500 3L15.500 9L6.500 14.500z" fill="#e0e0e0" stroke="#000" stroke-width=".9"/><path d="M10.500 3L12.500 1L14 2.500L16 2L16 8L15.500 9z" fill="#f01020"/><path d="M6.500 14.500l1.700-3.300l2 2z" fill="#d01020"/></svg>
<svg class="ic" style="left:836px;top:107px" viewBox="0 0 16 16"><path d="M0 1.500h16M0 15.500h16" stroke="#e01020" stroke-width="1.200" shape-rendering="crispEdges"/><path d="M0 8.500h16" stroke="#404040" shape-rendering="crispEdges"/><path d="M1 12c2-12 4-12 6-3s4 8 6-4l2 4" fill="none" stroke="#507060" stroke-width="1"/></svg>
<svg class="ic" style="left:859px;top:107px" viewBox="0 0 16 16"><path d="M0 1.500h16M0 15.500h16" stroke="#e01020" stroke-width="1.200" shape-rendering="crispEdges"/><text x="8" y="13" text-anchor="middle" font-family='"Liberation Sans","Noto Sans CJK SC",sans-serif' font-size="10.500" font-weight="500" fill="#a0a000">金</text></svg>
<svg class="ic" style="left:882px;top:107px" viewBox="0 0 16 16"><text x="4.500" y="9.500" text-anchor="middle" font-family='"Liberation Sans","Noto Sans CJK SC",sans-serif' font-size="11" fill="#c01020">J</text><path d="M0 15.500L15.500 1.500M8 8.500H16M4.500 11.500H16M0 15.500H16" stroke="#000" stroke-width="1.100" fill="none"/></svg>
<svg class="ic" style="left:905px;top:107px" viewBox="0 0 16 16"><text x="4.500" y="9.500" text-anchor="middle" font-family='"Liberation Sans","Noto Sans CJK SC",sans-serif' font-size="11" font-weight="bold" fill="#c01020">F</text><path d="M0 15.500L15.500 1.500M8 8.500H16M4.500 11.500H16M0 15.500H16" stroke="#000" stroke-width="1.100" fill="none"/></svg>
<svg class="ic" style="left:928px;top:107px" viewBox="0 0 16 16"><text x="4.500" y="9.500" text-anchor="middle" font-family='"Liberation Sans","Noto Sans CJK SC",sans-serif' font-size="10" font-weight="500" fill="#a0a000">金</text><path d="M0 15.500L15.500 1.500M8 8.500H16M4.500 11.500H16M0 15.500H16" stroke="#000" stroke-width="1.100" fill="none"/></svg>
<svg class="ic" style="left:951px;top:107px" viewBox="0 0 16 16"><text x="4.500" y="9.500" text-anchor="middle" font-family='"Liberation Sans","Noto Sans CJK SC",sans-serif' font-size="10" font-weight="500" fill="#c01020">神</text><path d="M0 15.500L15.500 1.500M8 8.500H16M4.500 11.500H16M0 15.500H16" stroke="#000" stroke-width="1.100" fill="none"/></svg>
<svg class="ic" style="left:974px;top:107px" viewBox="0 0 16 16"><text x="4.500" y="9.500" text-anchor="middle" font-family='"Liberation Sans","Noto Sans CJK SC",sans-serif' font-size="10" font-weight="500" fill="#c01020">赢</text><path d="M0 15.500L15.500 1.500M8 8.500H16M4.500 11.500H16M0 15.500H16" stroke="#000" stroke-width="1.100" fill="none"/></svg>
<svg class="ic" style="left:997px;top:107px" viewBox="0 0 16 16"><text x="4.500" y="9.500" text-anchor="middle" font-family='"Liberation Sans","Noto Sans CJK SC",sans-serif' font-size="10" font-weight="500" fill="#c01020">四</text><path d="M0 15.500L15.500 1.500M8 8.500H16M4.500 11.500H16M0 15.500H16" stroke="#000" stroke-width="1.100" fill="none"/></svg>
<div class="sep" style="left:1018px;top:104px;height:24px"></div>
<div class="grip" style="left:1023px;top:106px;height:20px"></div>
<svg class="ic" style="left:1030px;top:107px" viewBox="0 0 16 16"><circle cx="8" cy="8" r="7.800" fill="#f01020"/><path d="M8 .2a7.800 7.800 0 0 1 0 15.600a3.900 3.900 0 0 1 0-7.800a3.900 3.900 0 0 0 0-7.800z" fill="#70c8f0"/><circle cx="8" cy="4.100" r="1.500" fill="#70c8f0"/><circle cx="8" cy="11.900" r="1.500" fill="#f01020"/></svg>
<svg class="ic" style="left:1053px;top:107px" viewBox="0 0 16 16"><path d="M8 8c-2-4-7-4-7 0s5 4 7 0" fill="none" stroke="#4080e0" stroke-width="2"/><path d="M8 8c2 4 7 4 7 0s-5-4-7 0" fill="none" stroke="#4080e0" stroke-width="2"/><path d="M3 5.500c2-1.500 4 0 5 2.500s3 4 5 2.500" fill="none" stroke="#e01020" stroke-width="2"/></svg>
<div class="ln" style="top:128px;background:#a0a0a0"></div>
<div class="a" style="left:1358px;top:23px;width:2px;height:106px;background:#a8a8a8"></div>
<svg class="a" style="left:0;top:129px" width="1360" height="553" viewBox="0 129 1360 553"><rect x="0" y="129" width="1360" height="553" fill="#fff"/><g shape-rendering="crispEdges"><rect x="1358" y="129" width="1" height="553" fill="#c8c8c8"/><rect x="1359" y="129" width="1" height="553" fill="#808080"/><rect x="71" y="142" width="1287" height="1" fill="#808080"/><path d="M71 602.5H1358" stroke="#909090" stroke-width="1" stroke-dasharray="3 3" fill="none"/><path d="M71 624.5H1358" stroke="#909090" stroke-width="1" stroke-dasharray="3 3" fill="none"/><path d="M71 643.5H1358" stroke="#909090" stroke-width="1" stroke-dasharray="3 3" fill="none"/><path d="M71 662.5H1358" stroke="#909090" stroke-width="1" stroke-dasharray="3 3" fill="none"/><path d="M71 257.5H1358" stroke="#000" stroke-width="1" stroke-dasharray="3 3" fill="none"/><path d="M1102.5 143V681" stroke="#000" stroke-width="1" stroke-dasharray="3 3" fill="none"/><path d="M1149 461.5H1356" stroke="#808080" stroke-width="1" stroke-dasharray="5 2" fill="none"/></g><g shape-rendering="crispEdges"><rect x="74" y="291" width="1" height="11" fill="#d0142c"/><rect x="74" y="337" width="1" height="13" fill="#d0142c"/><rect x="71.5" y="302.5" width="5" height="34" fill="#fff" stroke="#d0142c" stroke-width="1"/><rect x="81" y="303" width="1" height="29" fill="#0c7a1c"/><rect x="78" y="310" width="6" height="17" fill="#0c7a1c"/><rect x="88" y="294" width="1" height="22" fill="#d0142c"/><rect x="88" y="327" width="1" height="6" fill="#d0142c"/><rect x="85.5" y="316.5" width="5" height="10" fill="#fff" stroke="#d0142c" stroke-width="1"/><rect x="95" y="307" width="1" height="20" fill="#0c7a1c"/><rect x="92" y="318" width="6" height="7" fill="#0c7a1c"/><rect x="102" y="320" width="1" height="23" fill="#0c7a1c"/><rect x="99" y="322" width="6" height="13" fill="#0c7a1c"/><rect x="109" y="318" width="1" height="2" fill="#d0142c"/><rect x="109" y="336" width="1" height="1" fill="#d0142c"/><rect x="106.5" y="320.5" width="5" height="15" fill="#fff" stroke="#d0142c" stroke-width="1"/><rect x="116" y="317" width="1" height="23" fill="#0c7a1c"/><rect x="113" y="320" width="6" height="17" fill="#0c7a1c"/><rect x="123" y="334" width="1" height="9" fill="#d0142c"/><rect x="120" y="337" width="6" height="3" fill="#d0142c"/><rect x="130" y="333" width="1" height="1" fill="#d0142c"/><rect x="130" y="340" width="1" height="10" fill="#d0142c"/><rect x="127.5" y="334.5" width="5" height="5" fill="#fff" stroke="#d0142c" stroke-width="1"/><rect x="137" y="329" width="1" height="10" fill="#0c7a1c"/><rect x="134" y="333" width="6" height="4" fill="#0c7a1c"/><rect x="144" y="333" width="1" height="16" fill="#0c7a1c"/><rect x="141" y="337" width="6" height="12" fill="#0c7a1c"/><rect x="151" y="343" width="1" height="18" fill="#0c7a1c"/><rect x="148" y="347" width="6" height="12" fill="#0c7a1c"/><rect x="158" y="348" width="1" height="11" fill="#d0142c"/><rect x="155.5" y="359.5" width="5" height="7" fill="#fff" stroke="#d0142c" stroke-width="1"/><rect x="165" y="349" width="1" height="5" fill="#d0142c"/><rect x="165" y="357" width="1" height="2" fill="#d0142c"/><rect x="162.5" y="354.5" width="5" height="2" fill="#fff" stroke="#d0142c" stroke-width="1"/><rect x="172" y="339" width="1" height="5" fill="#d0142c"/><rect x="172" y="353" width="1" height="7" fill="#d0142c"/><rect x="169.5" y="344.5" width="5" height="8" fill="#fff" stroke="#d0142c" stroke-width="1"/><rect x="179" y="342" width="1" height="20" fill="#0c7a1c"/><rect x="176" y="347" width="6" height="12" fill="#0c7a1c"/><rect x="186" y="354" width="1" height="8" fill="#0c7a1c"/><rect x="183" y="354" width="6" height="7" fill="#0c7a1c"/><rect x="193" y="360" width="1" height="27" fill="#0c7a1c"/><rect x="190" y="360" width="6" height="26" fill="#0c7a1c"/><rect x="200" y="375" width="1" height="19" fill="#0c7a1c"/><rect x="197" y="385" width="6" height="8" fill="#0c7a1c"/><rect x="207" y="391" width="1" height="22" fill="#0c7a1c"/><rect x="204" y="391" width="6" height="20" fill="#0c7a1c"/><rect x="214" y="404" width="1" height="11" fill="#d0142c"/><rect x="211" y="406" width="6" height="1" fill="#d0142c"/><rect x="221" y="400" width="1" height="32" fill="#0c7a1c"/><rect x="218" y="410" width="6" height="17" fill="#0c7a1c"/><rect x="228" y="428" width="1" height="19" fill="#0c7a1c"/><rect x="225" y="428" width="6" height="5" fill="#0c7a1c"/><rect x="235" y="430" width="1" height="9" fill="#0c7a1c"/><rect x="232" y="433" width="6" height="5" fill="#0c7a1c"/><rect x="242" y="437" width="1" height="10" fill="#0c7a1c"/><rect x="239" y="438" width="6" height="8" fill="#0c7a1c"/><rect x="249" y="441" width="1" height="11" fill="#0c7a1c"/><rect x="246" y="445" width="6" height="5" fill="#0c7a1c"/><rect x="256" y="450" width="1" height="7" fill="#0c7a1c"/><rect x="253" y="450" width="6" height="3" fill="#0c7a1c"/><rect x="263" y="439" width="1" height="3" fill="#d0142c"/><rect x="260.5" y="442.5" width="5" height="8" fill="#fff" stroke="#d0142c" stroke-width="1"/><rect x="270" y="432" width="1" height="4" fill="#d0142c"/><rect x="267.5" y="436.5" width="5" height="5" fill="#fff" stroke="#d0142c" stroke-width="1"/><rect x="277" y="418" width="1" height="9" fill="#d0142c"/><rect x="277" y="437" width="1" height="2" fill="#d0142c"/><rect x="274.5" y="427.5" width="5" height="9" fill="#fff" stroke="#d0142c" stroke-width="1"/><rect x="284" y="423" width="1" height="20" fill="#0c7a1c"/><rect x="281" y="426" width="6" height="11" fill="#0c7a1c"/><rect x="291" y="420" width="1" height="6" fill="#d0142c"/><rect x="291" y="437" width="1" height="3" fill="#d0142c"/><rect x="288.5" y="426.5" width="5" height="10" fill="#fff" stroke="#d0142c" stroke-width="1"/><rect x="298" y="410" width="1" height="20" fill="#0c7a1c"/><rect x="295" y="426" width="6" height="3" fill="#0c7a1c"/><rect x="305" y="428" width="1" height="14" fill="#0c7a1c"/><rect x="302" y="428" width="6" height="12" fill="#0c7a1c"/><rect x="312" y="428" width="1" height="13" fill="#0c7a1c"/><rect x="309" y="439" width="6" height="1" fill="#0c7a1c"/><rect x="319" y="435" width="1" height="2" fill="#d0142c"/><rect x="319" y="441" width="1" height="10" fill="#d0142c"/><rect x="316.5" y="437.5" width="5" height="3" fill="#fff" stroke="#d0142c" stroke-width="1"/><rect x="326" y="424" width="1" height="16" fill="#0c7a1c"/><rect x="323" y="435" width="6" height="3" fill="#0c7a1c"/><rect x="333" y="437" width="1" height="13" fill="#0c7a1c"/><rect x="330" y="437" width="6" height="13" fill="#0c7a1c"/><rect x="340" y="449" width="1" height="6" fill="#0c7a1c"/><rect x="337" y="449" width="6" height="6" fill="#0c7a1c"/><rect x="347" y="452" width="1" height="8" fill="#d0142c"/><rect x="344" y="452" width="6" height="1" fill="#d0142c"/><rect x="354" y="452" width="1" height="7" fill="#0c7a1c"/><rect x="351" y="452" width="6" height="5" fill="#0c7a1c"/><rect x="361" y="445" width="1" height="3" fill="#d0142c"/><rect x="361" y="455" width="1" height="2" fill="#d0142c"/><rect x="358.5" y="448.5" width="5" height="6" fill="#fff" stroke="#d0142c" stroke-width="1"/><rect x="368" y="438" width="1" height="8" fill="#d0142c"/><rect x="365.5" y="446.5" width="5" height="4" fill="#fff" stroke="#d0142c" stroke-width="1"/><rect x="375" y="444" width="1" height="5" fill="#0c7a1c"/><rect x="372" y="446" width="6" height="1" fill="#0c7a1c"/><rect x="382" y="444" width="1" height="10" fill="#0c7a1c"/><rect x="379" y="444" width="6" height="7" fill="#0c7a1c"/><rect x="389" y="443" width="1" height="3" fill="#d0142c"/><rect x="389" y="452" width="1" height="1" fill="#d0142c"/><rect x="386.5" y="446.5" width="5" height="5" fill="#fff" stroke="#d0142c" stroke-width="1"/><rect x="396" y="444" width="1" height="10" fill="#0c7a1c"/><rect x="393" y="446" width="6" height="7" fill="#0c7a1c"/><rect x="400.5" y="443.5" width="5" height="8" fill="#fff" stroke="#d0142c" stroke-width="1"/><rect x="410" y="439" width="1" height="10" fill="#0c7a1c"/><rect x="407" y="442" width="6" height="5" fill="#0c7a1c"/><rect x="417" y="446" width="1" height="5" fill="#0c7a1c"/><rect x="414" y="446" width="6" height="3" fill="#0c7a1c"/><rect x="424" y="447" width="1" height="13" fill="#0c7a1c"/><rect x="421" y="447" width="6" height="6" fill="#0c7a1c"/><rect x="431" y="446" width="1" height="2" fill="#d0142c"/><rect x="431" y="453" width="1" height="2" fill="#d0142c"/><rect x="428.5" y="448.5" width="5" height="4" fill="#fff" stroke="#d0142c" stroke-width="1"/><rect x="438" y="441" width="1" height="9" fill="#d0142c"/><rect x="435" y="446" width="6" height="2" fill="#d0142c"/><rect x="445" y="438" width="1" height="14" fill="#0c7a1c"/><rect x="442" y="445" width="6" height="5" fill="#0c7a1c"/><rect x="452" y="438" width="1" height="7" fill="#d0142c"/><rect x="452" y="449" width="1" height="3" fill="#d0142c"/><rect x="449.5" y="445.5" width="5" height="3" fill="#fff" stroke="#d0142c" stroke-width="1"/><rect x="459" y="435" width="1" height="1" fill="#d0142c"/><rect x="459" y="444" width="1" height="2" fill="#d0142c"/><rect x="456.5" y="436.5" width="5" height="7" fill="#fff" stroke="#d0142c" stroke-width="1"/><rect x="466" y="433" width="1" height="11" fill="#0c7a1c"/><rect x="463" y="436" width="6" height="6" fill="#0c7a1c"/><rect x="473" y="440" width="1" height="8" fill="#0c7a1c"/><rect x="470" y="441" width="6" height="5" fill="#0c7a1c"/><rect x="480" y="441" width="1" height="8" fill="#0c7a1c"/><rect x="477" y="447" width="6" height="1" fill="#0c7a1c"/><rect x="487" y="447" width="1" height="13" fill="#0c7a1c"/><rect x="484" y="448" width="6" height="10" fill="#0c7a1c"/><rect x="494" y="457" width="1" height="1" fill="#d0142c"/><rect x="491.5" y="452.5" width="5" height="4" fill="#fff" stroke="#d0142c" stroke-width="1"/><rect x="501" y="452" width="1" height="8" fill="#0c7a1c"/><rect x="498" y="452" width="6" height="6" fill="#0c7a1c"/><rect x="508" y="457" width="1" height="13" fill="#0c7a1c"/><rect x="505" y="457" width="6" height="12" fill="#0c7a1c"/><rect x="515" y="466" width="1" height="11" fill="#0c7a1c"/><rect x="512" y="468" width="6" height="5" fill="#0c7a1c"/><rect x="522" y="468" width="1" height="7" fill="#d0142c"/><rect x="519" y="469" width="6" height="1" fill="#d0142c"/><rect x="529" y="464" width="1" height="1" fill="#d0142c"/><rect x="529" y="469" width="1" height="1" fill="#d0142c"/><rect x="526.5" y="465.5" width="5" height="3" fill="#fff" stroke="#d0142c" stroke-width="1"/><rect x="536" y="459" width="1" height="1" fill="#d0142c"/><rect x="536" y="465" width="1" height="3" fill="#d0142c"/><rect x="533.5" y="460.5" width="5" height="4" fill="#fff" stroke="#d0142c" stroke-width="1"/><rect x="543" y="458" width="1" height="4" fill="#0c7a1c"/><rect x="540" y="459" width="6" height="1" fill="#0c7a1c"/><rect x="550" y="457" width="1" height="6" fill="#d0142c"/><rect x="547" y="459" width="6" height="1" fill="#d0142c"/><rect x="557" y="459" width="1" height="9" fill="#0c7a1c"/><rect x="554" y="459" width="6" height="5" fill="#0c7a1c"/><rect x="564" y="457" width="1" height="1" fill="#d0142c"/><rect x="564" y="464" width="1" height="1" fill="#d0142c"/><rect x="561.5" y="458.5" width="5" height="5" fill="#fff" stroke="#d0142c" stroke-width="1"/><rect x="571" y="457" width="1" height="5" fill="#0c7a1c"/><rect x="568" y="458" width="6" height="3" fill="#0c7a1c"/><rect x="578" y="456" width="1" height="1" fill="#d0142c"/><rect x="578" y="461" width="1" height="4" fill="#d0142c"/><rect x="575.5" y="457.5" width="5" height="3" fill="#fff" stroke="#d0142c" stroke-width="1"/><rect x="585" y="449" width="1" height="4" fill="#d0142c"/><rect x="585" y="457" width="1" height="1" fill="#d0142c"/><rect x="582.5" y="453.5" width="5" height="3" fill="#fff" stroke="#d0142c" stroke-width="1"/><rect x="592" y="448" width="1" height="8" fill="#0c7a1c"/><rect x="589" y="451" width="6" height="4" fill="#0c7a1c"/><rect x="599" y="451" width="1" height="8" fill="#d0142c"/><rect x="596" y="454" width="6" height="1" fill="#d0142c"/><rect x="606" y="454" width="1" height="18" fill="#0c7a1c"/><rect x="603" y="454" width="6" height="13" fill="#0c7a1c"/><rect x="613" y="458" width="1" height="9" fill="#d0142c"/><rect x="610" y="464" width="6" height="1" fill="#d0142c"/><rect x="620" y="454" width="1" height="3" fill="#d0142c"/><rect x="620" y="465" width="1" height="1" fill="#d0142c"/><rect x="617.5" y="457.5" width="5" height="7" fill="#fff" stroke="#d0142c" stroke-width="1"/><rect x="627" y="451" width="1" height="3" fill="#d0142c"/><rect x="627" y="458" width="1" height="4" fill="#d0142c"/><rect x="624.5" y="454.5" width="5" height="3" fill="#fff" stroke="#d0142c" stroke-width="1"/><rect x="634" y="451" width="1" height="7" fill="#d0142c"/><rect x="631" y="453" width="6" height="1" fill="#d0142c"/><rect x="641" y="453" width="1" height="11" fill="#0c7a1c"/><rect x="638" y="453" width="6" height="1" fill="#0c7a1c"/><rect x="648" y="456" width="1" height="15" fill="#0c7a1c"/><rect x="645" y="457" width="6" height="4" fill="#0c7a1c"/><rect x="655" y="460" width="1" height="5" fill="#0c7a1c"/><rect x="652" y="460" width="6" height="3" fill="#0c7a1c"/><rect x="662" y="458" width="1" height="2" fill="#d0142c"/><rect x="662" y="463" width="1" height="2" fill="#d0142c"/><rect x="659.5" y="460.5" width="5" height="2" fill="#fff" stroke="#d0142c" stroke-width="1"/><rect x="669" y="460" width="1" height="5" fill="#0c7a1c"/><rect x="666" y="460" width="6" height="3" fill="#0c7a1c"/><rect x="676" y="464" width="1" height="9" fill="#0c7a1c"/><rect x="673" y="464" width="6" height="8" fill="#0c7a1c"/><rect x="683" y="469" width="1" height="8" fill="#0c7a1c"/><rect x="680" y="472" width="6" height="1" fill="#0c7a1c"/><rect x="690" y="475" width="1" height="20" fill="#0c7a1c"/><rect x="687" y="475" width="6" height="7" fill="#0c7a1c"/><rect x="697" y="483" width="1" height="7" fill="#0c7a1c"/><rect x="694" y="486" width="6" height="1" fill="#0c7a1c"/><rect x="704" y="480" width="1" height="1" fill="#d0142c"/><rect x="704" y="487" width="1" height="4" fill="#d0142c"/><rect x="701.5" y="481.5" width="5" height="5" fill="#fff" stroke="#d0142c" stroke-width="1"/><rect x="711" y="481" width="1" height="3" fill="#d0142c"/><rect x="708.5" y="469.5" width="5" height="11" fill="#fff" stroke="#d0142c" stroke-width="1"/><rect x="718" y="466" width="1" height="8" fill="#0c7a1c"/><rect x="715" y="468" width="6" height="1" fill="#0c7a1c"/><rect x="725" y="460" width="1" height="1" fill="#d0142c"/><rect x="725" y="470" width="1" height="1" fill="#d0142c"/><rect x="722.5" y="461.5" width="5" height="8" fill="#fff" stroke="#d0142c" stroke-width="1"/><rect x="732" y="458" width="1" height="7" fill="#0c7a1c"/><rect x="729" y="459" width="6" height="4" fill="#0c7a1c"/><rect x="739" y="461" width="1" height="6" fill="#d0142c"/><rect x="736" y="462" width="6" height="2" fill="#d0142c"/><rect x="746" y="461" width="1" height="9" fill="#0c7a1c"/><rect x="743" y="464" width="6" height="1" fill="#0c7a1c"/><rect x="753" y="464" width="1" height="3" fill="#0c7a1c"/><rect x="750" y="464" width="6" height="3" fill="#0c7a1c"/><rect x="760" y="467" width="1" height="4" fill="#d0142c"/><rect x="757.5" y="462.5" width="5" height="4" fill="#fff" stroke="#d0142c" stroke-width="1"/><rect x="767" y="462" width="1" height="7" fill="#0c7a1c"/><rect x="764" y="462" width="6" height="5" fill="#0c7a1c"/><rect x="774" y="452" width="1" height="5" fill="#d0142c"/><rect x="774" y="466" width="1" height="1" fill="#d0142c"/><rect x="771.5" y="457.5" width="5" height="8" fill="#fff" stroke="#d0142c" stroke-width="1"/><rect x="781" y="449" width="1" height="1" fill="#d0142c"/><rect x="778.5" y="450.5" width="5" height="6" fill="#fff" stroke="#d0142c" stroke-width="1"/><rect x="788" y="448" width="1" height="25" fill="#0c7a1c"/><rect x="785" y="450" width="6" height="21" fill="#0c7a1c"/><rect x="795" y="465" width="1" height="2" fill="#d0142c"/><rect x="795" y="470" width="1" height="3" fill="#d0142c"/><rect x="792.5" y="467.5" width="5" height="2" fill="#fff" stroke="#d0142c" stroke-width="1"/><rect x="802" y="465" width="1" height="5" fill="#0c7a1c"/><rect x="799" y="467" width="6" height="1" fill="#0c7a1c"/><rect x="809" y="465" width="1" height="8" fill="#0c7a1c"/><rect x="806" y="465" width="6" height="8" fill="#0c7a1c"/><rect x="816" y="467" width="1" height="1" fill="#d0142c"/><rect x="816" y="476" width="1" height="1" fill="#d0142c"/><rect x="813.5" y="468.5" width="5" height="7" fill="#fff" stroke="#d0142c" stroke-width="1"/><rect x="823" y="468" width="1" height="3" fill="#0c7a1c"/><rect x="820" y="468" width="6" height="1" fill="#0c7a1c"/><rect x="830" y="469" width="1" height="6" fill="#0c7a1c"/><rect x="827" y="469" width="6" height="6" fill="#0c7a1c"/><rect x="837" y="473" width="1" height="8" fill="#0c7a1c"/><rect x="834" y="474" width="6" height="5" fill="#0c7a1c"/><rect x="844" y="479" width="1" height="6" fill="#0c7a1c"/><rect x="841" y="479" width="6" height="6" fill="#0c7a1c"/><rect x="851" y="479" width="1" height="1" fill="#d0142c"/><rect x="851" y="484" width="1" height="7" fill="#d0142c"/><rect x="848.5" y="480.5" width="5" height="3" fill="#fff" stroke="#d0142c" stroke-width="1"/><rect x="858" y="474" width="1" height="1" fill="#d0142c"/><rect x="858" y="479" width="1" height="1" fill="#d0142c"/><rect x="855.5" y="475.5" width="5" height="3" fill="#fff" stroke="#d0142c" stroke-width="1"/><rect x="865" y="473" width="1" height="9" fill="#0c7a1c"/><rect x="862" y="474" width="6" height="7" fill="#0c7a1c"/><rect x="872" y="467" width="1" height="1" fill="#d0142c"/><rect x="869.5" y="468.5" width="5" height="10" fill="#fff" stroke="#d0142c" stroke-width="1"/><rect x="879" y="461" width="1" height="6" fill="#d0142c"/><rect x="876.5" y="467.5" width="5" height="2" fill="#fff" stroke="#d0142c" stroke-width="1"/><rect x="886" y="463" width="1" height="4" fill="#d0142c"/><rect x="883" y="464" width="6" height="1" fill="#d0142c"/><rect x="893" y="463" width="1" height="7" fill="#0c7a1c"/><rect x="890" y="464" width="6" height="5" fill="#0c7a1c"/><rect x="900" y="463" width="1" height="1" fill="#d0142c"/><rect x="900" y="470" width="1" height="2" fill="#d0142c"/><rect x="897.5" y="464.5" width="5" height="5" fill="#fff" stroke="#d0142c" stroke-width="1"/><rect x="907" y="462" width="1" height="5" fill="#0c7a1c"/><rect x="904" y="462" width="6" height="5" fill="#0c7a1c"/><rect x="914" y="463" width="1" height="9" fill="#0c7a1c"/><rect x="911" y="466" width="6" height="5" fill="#0c7a1c"/><rect x="921" y="470" width="1" height="9" fill="#0c7a1c"/><rect x="918" y="470" width="6" height="8" fill="#0c7a1c"/><rect x="928" y="474" width="1" height="6" fill="#0c7a1c"/><rect x="925" y="475" width="6" height="3" fill="#0c7a1c"/><rect x="935" y="473" width="1" height="8" fill="#d0142c"/><rect x="932" y="476" width="6" height="2" fill="#d0142c"/><rect x="942" y="474" width="1" height="7" fill="#0c7a1c"/><rect x="939" y="475" width="6" height="4" fill="#0c7a1c"/><rect x="949" y="479" width="1" height="1" fill="#d0142c"/><rect x="946.5" y="474.5" width="5" height="4" fill="#fff" stroke="#d0142c" stroke-width="1"/><rect x="956" y="468" width="1" height="1" fill="#d0142c"/><rect x="956" y="473" width="1" height="1" fill="#d0142c"/><rect x="953.5" y="469.5" width="5" height="3" fill="#fff" stroke="#d0142c" stroke-width="1"/><rect x="963" y="465" width="1" height="1" fill="#d0142c"/><rect x="963" y="468" width="1" height="2" fill="#d0142c"/><rect x="960.5" y="466.5" width="5" height="1" fill="#fff" stroke="#d0142c" stroke-width="1"/><rect x="970" y="464" width="1" height="4" fill="#0c7a1c"/><rect x="967" y="465" width="6" height="1" fill="#0c7a1c"/><rect x="977" y="466" width="1" height="3" fill="#0c7a1c"/><rect x="974" y="466" width="6" height="1" fill="#0c7a1c"/><rect x="984" y="464" width="1" height="5" fill="#d0142c"/><rect x="981" y="464" width="6" height="3" fill="#d0142c"/><rect x="991" y="462" width="1" height="7" fill="#d0142c"/><rect x="988" y="463" width="6" height="3" fill="#d0142c"/><rect x="998" y="462" width="1" height="5" fill="#0c7a1c"/><rect x="995" y="464" width="6" height="3" fill="#0c7a1c"/><rect x="1005" y="462" width="1" height="1" fill="#d0142c"/><rect x="1005" y="467" width="1" height="1" fill="#d0142c"/><rect x="1002.5" y="463.5" width="5" height="3" fill="#fff" stroke="#d0142c" stroke-width="1"/><rect x="1012" y="462" width="1" height="7" fill="#0c7a1c"/><rect x="1009" y="463" width="6" height="4" fill="#0c7a1c"/><rect x="1019" y="465" width="1" height="5" fill="#d0142c"/><rect x="1016" y="466" width="6" height="1" fill="#d0142c"/><rect x="1026" y="464" width="1" height="6" fill="#d0142c"/><rect x="1023" y="465" width="6" height="1" fill="#d0142c"/><rect x="1033" y="463" width="1" height="13" fill="#0c7a1c"/><rect x="1030" y="464" width="6" height="11" fill="#0c7a1c"/><rect x="1040" y="474" width="1" height="8" fill="#d0142c"/><rect x="1037.5" y="470.5" width="5" height="3" fill="#fff" stroke="#d0142c" stroke-width="1"/><rect x="1047" y="459" width="1" height="5" fill="#d0142c"/><rect x="1044.5" y="464.5" width="5" height="5" fill="#fff" stroke="#d0142c" stroke-width="1"/><rect x="1054" y="461" width="1" height="5" fill="#0c7a1c"/><rect x="1051" y="462" width="6" height="1" fill="#0c7a1c"/><rect x="1061" y="457" width="1" height="1" fill="#d0142c"/><rect x="1061" y="464" width="1" height="1" fill="#d0142c"/><rect x="1058.5" y="458.5" width="5" height="5" fill="#fff" stroke="#d0142c" stroke-width="1"/><rect x="1068" y="457" width="1" height="4" fill="#d0142c"/><rect x="1065" y="458" width="6" height="1" fill="#d0142c"/><rect x="1075" y="457" width="1" height="6" fill="#0c7a1c"/><rect x="1072" y="457" width="6" height="3" fill="#0c7a1c"/><rect x="1082" y="458" width="1" height="6" fill="#0c7a1c"/><rect x="1079" y="458" width="6" height="5" fill="#0c7a1c"/><rect x="1089" y="461" width="1" height="6" fill="#0c7a1c"/><rect x="1086" y="463" width="6" height="2" fill="#0c7a1c"/><rect x="1096" y="464" width="1" height="4" fill="#0c7a1c"/><rect x="1093" y="464" width="6" height="1" fill="#0c7a1c"/><rect x="1103" y="457" width="1" height="1" fill="#d0142c"/><rect x="1100.5" y="458.5" width="5" height="9" fill="#fff" stroke="#d0142c" stroke-width="1"/><rect x="1110" y="456" width="1" height="5" fill="#0c7a1c"/><rect x="1107" y="457" width="6" height="3" fill="#0c7a1c"/><rect x="1117" y="458" width="1" height="4" fill="#0c7a1c"/><rect x="1114" y="458" width="6" height="2" fill="#0c7a1c"/><rect x="1124" y="457" width="1" height="6" fill="#d0142c"/><rect x="1121" y="459" width="6" height="2" fill="#d0142c"/><rect x="1131" y="451" width="1" height="4" fill="#d0142c"/><rect x="1131" y="460" width="1" height="1" fill="#d0142c"/><rect x="1128.5" y="455.5" width="5" height="4" fill="#fff" stroke="#d0142c" stroke-width="1"/><rect x="1138" y="455" width="1" height="6" fill="#0c7a1c"/><rect x="1135" y="455" width="6" height="6" fill="#0c7a1c"/><rect x="1143" y="460" width="5" height="1" fill="#0c7a1c"/><rect x="1145" y="460" width="1" height="2" fill="#0c7a1c"/><rect x="71.5" y="635.5" width="5" height="45" fill="#fff" stroke="#d0142c" stroke-width="1"/><rect x="78" y="621" width="6" height="60" fill="#0c7a1c"/><rect x="85.5" y="636.5" width="5" height="44" fill="#fff" stroke="#d0142c" stroke-width="1"/><rect x="92" y="653" width="6" height="28" fill="#0c7a1c"/><rect x="99" y="663" width="6" height="18" fill="#0c7a1c"/><rect x="106.5" y="666.5" width="5" height="14" fill="#fff" stroke="#d0142c" stroke-width="1"/><rect x="113" y="668" width="6" height="13" fill="#0c7a1c"/><rect x="120.5" y="676.5" width="5" height="4" fill="#fff" stroke="#d0142c" stroke-width="1"/><rect x="127.5" y="677.5" width="5" height="3" fill="#fff" stroke="#d0142c" stroke-width="1"/><rect x="134" y="669" width="6" height="12" fill="#0c7a1c"/><rect x="141" y="672" width="6" height="9" fill="#0c7a1c"/><rect x="148" y="671" width="6" height="10" fill="#0c7a1c"/><rect x="155.5" y="671.5" width="5" height="9" fill="#fff" stroke="#d0142c" stroke-width="1"/><rect x="162.5" y="671.5" width="5" height="9" fill="#fff" stroke="#d0142c" stroke-width="1"/><rect x="169.5" y="671.5" width="5" height="9" fill="#fff" stroke="#d0142c" stroke-width="1"/><rect x="176" y="675" width="6" height="6" fill="#0c7a1c"/><rect x="183" y="676" width="6" height="5" fill="#0c7a1c"/><rect x="190" y="673" width="6" height="8" fill="#0c7a1c"/><rect x="197" y="672" width="6" height="9" fill="#0c7a1c"/><rect x="204" y="670" width="6" height="11" fill="#0c7a1c"/><rect x="211.5" y="673.5" width="5" height="7" fill="#fff" stroke="#d0142c" stroke-width="1"/><rect x="218" y="670" width="6" height="11" fill="#0c7a1c"/><rect x="225" y="667" width="6" height="14" fill="#0c7a1c"/><rect x="232" y="673" width="6" height="8" fill="#0c7a1c"/><rect x="239" y="674" width="6" height="7" fill="#0c7a1c"/><rect x="246" y="672" width="6" height="9" fill="#0c7a1c"/><rect x="253" y="675" width="6" height="6" fill="#0c7a1c"/><rect x="260.5" y="678.5" width="5" height="2" fill="#fff" stroke="#d0142c" stroke-width="1"/><rect x="267.5" y="669.5" width="5" height="11" fill="#fff" stroke="#d0142c" stroke-width="1"/><rect x="274.5" y="662.5" width="5" height="18" fill="#fff" stroke="#d0142c" stroke-width="1"/><rect x="281" y="667" width="6" height="14" fill="#0c7a1c"/><rect x="288.5" y="662.5" width="5" height="18" fill="#fff" stroke="#d0142c" stroke-width="1"/><rect x="295" y="655" width="6" height="26" fill="#0c7a1c"/><rect x="302" y="669" width="6" height="12" fill="#0c7a1c"/><rect x="309" y="663" width="6" height="18" fill="#0c7a1c"/><rect x="316.5" y="654.5" width="5" height="26" fill="#fff" stroke="#d0142c" stroke-width="1"/><rect x="323" y="648" width="6" height="33" fill="#0c7a1c"/><rect x="330" y="666" width="6" height="15" fill="#0c7a1c"/><rect x="337" y="675" width="6" height="6" fill="#0c7a1c"/><rect x="344.5" y="667.5" width="5" height="13" fill="#fff" stroke="#d0142c" stroke-width="1"/><rect x="351" y="668" width="6" height="13" fill="#0c7a1c"/><rect x="358.5" y="667.5" width="5" height="13" fill="#fff" stroke="#d0142c" stroke-width="1"/><rect x="365.5" y="662.5" width="5" height="18" fill="#fff" stroke="#d0142c" stroke-width="1"/><rect x="372" y="670" width="6" height="11" fill="#0c7a1c"/><rect x="379" y="672" width="6" height="9" fill="#0c7a1c"/><rect x="386.5" y="671.5" width="5" height="9" fill="#fff" stroke="#d0142c" stroke-width="1"/><rect x="393" y="670" width="6" height="11" fill="#0c7a1c"/><rect x="400.5" y="663.5" width="5" height="17" fill="#fff" stroke="#d0142c" stroke-width="1"/><rect x="407" y="658" width="6" height="23" fill="#0c7a1c"/><rect x="414" y="669" width="6" height="12" fill="#0c7a1c"/><rect x="421" y="668" width="6" height="13" fill="#0c7a1c"/><rect x="428.5" y="668.5" width="5" height="12" fill="#fff" stroke="#d0142c" stroke-width="1"/><rect x="435.5" y="665.5" width="5" height="15" fill="#fff" stroke="#d0142c" stroke-width="1"/><rect x="442" y="658" width="6" height="23" fill="#0c7a1c"/><rect x="449.5" y="663.5" width="5" height="17" fill="#fff" stroke="#d0142c" stroke-width="1"/><rect x="456.5" y="647.5" width="5" height="33" fill="#fff" stroke="#d0142c" stroke-width="1"/><rect x="463" y="655" width="6" height="26" fill="#0c7a1c"/><rect x="470" y="665" width="6" height="16" fill="#0c7a1c"/><rect x="477" y="667" width="6" height="14" fill="#0c7a1c"/><rect x="484" y="669" width="6" height="12" fill="#0c7a1c"/><rect x="491" y="679" width="6" height="2" fill="#d0142c"/><rect x="498" y="671" width="6" height="10" fill="#0c7a1c"/><rect x="505" y="669" width="6" height="12" fill="#0c7a1c"/><rect x="512" y="671" width="6" height="10" fill="#0c7a1c"/><rect x="519.5" y="675.5" width="5" height="5" fill="#fff" stroke="#d0142c" stroke-width="1"/><rect x="526.5" y="670.5" width="5" height="10" fill="#fff" stroke="#d0142c" stroke-width="1"/><rect x="533.5" y="668.5" width="5" height="12" fill="#fff" stroke="#d0142c" stroke-width="1"/><rect x="540" y="671" width="6" height="10" fill="#0c7a1c"/><rect x="547.5" y="665.5" width="5" height="15" fill="#fff" stroke="#d0142c" stroke-width="1"/><rect x="554" y="670" width="6" height="11" fill="#0c7a1c"/><rect x="561.5" y="669.5" width="5" height="11" fill="#fff" stroke="#d0142c" stroke-width="1"/><rect x="568" y="663" width="6" height="18" fill="#0c7a1c"/><rect x="575.5" y="665.5" width="5" height="15" fill="#fff" stroke="#d0142c" stroke-width="1"/><rect x="582.5" y="666.5" width="5" height="14" fill="#fff" stroke="#d0142c" stroke-width="1"/><rect x="589" y="666" width="6" height="15" fill="#0c7a1c"/><rect x="596.5" y="660.5" width="5" height="20" fill="#fff" stroke="#d0142c" stroke-width="1"/><rect x="603" y="667" width="6" height="14" fill="#0c7a1c"/><rect x="610.5" y="670.5" width="5" height="10" fill="#fff" stroke="#d0142c" stroke-width="1"/><rect x="617.5" y="667.5" width="5" height="13" fill="#fff" stroke="#d0142c" stroke-width="1"/><rect x="624.5" y="665.5" width="5" height="15" fill="#fff" stroke="#d0142c" stroke-width="1"/><rect x="631.5" y="666.5" width="5" height="14" fill="#fff" stroke="#d0142c" stroke-width="1"/><rect x="638" y="662" width="6" height="19" fill="#0c7a1c"/><rect x="645" y="668" width="6" height="13" fill="#0c7a1c"/><rect x="652" y="672" width="6" height="9" fill="#0c7a1c"/><rect x="659.5" y="671.5" width="5" height="9" fill="#fff" stroke="#d0142c" stroke-width="1"/><rect x="666" y="670" width="6" height="11" fill="#0c7a1c"/><rect x="673" y="672" width="6" height="9" fill="#0c7a1c"/><rect x="680" y="674" width="6" height="7" fill="#0c7a1c"/><rect x="687" y="671" width="6" height="10" fill="#0c7a1c"/><rect x="694" y="675" width="6" height="6" fill="#0c7a1c"/><rect x="701.5" y="668.5" width="5" height="12" fill="#fff" stroke="#d0142c" stroke-width="1"/><rect x="708.5" y="666.5" width="5" height="14" fill="#fff" stroke="#d0142c" stroke-width="1"/><rect x="715" y="669" width="6" height="12" fill="#0c7a1c"/><rect x="722.5" y="670.5" width="5" height="10" fill="#fff" stroke="#d0142c" stroke-width="1"/><rect x="729" y="663" width="6" height="18" fill="#0c7a1c"/><rect x="736.5" y="659.5" width="5" height="21" fill="#fff" stroke="#d0142c" stroke-width="1"/><rect x="743" y="660" width="6" height="21" fill="#0c7a1c"/><rect x="750" y="665" width="6" height="16" fill="#0c7a1c"/><rect x="757.5" y="664.5" width="5" height="16" fill="#fff" stroke="#d0142c" stroke-width="1"/><rect x="764" y="673" width="6" height="8" fill="#0c7a1c"/><rect x="771.5" y="658.5" width="5" height="22" fill="#fff" stroke="#d0142c" stroke-width="1"/><rect x="778.5" y="660.5" width="5" height="20" fill="#fff" stroke="#d0142c" stroke-width="1"/><rect x="785" y="602" width="6" height="79" fill="#0c7a1c"/><rect x="792.5" y="653.5" width="5" height="27" fill="#fff" stroke="#d0142c" stroke-width="1"/><rect x="799" y="666" width="6" height="15" fill="#0c7a1c"/><rect x="806" y="665" width="6" height="16" fill="#0c7a1c"/><rect x="813.5" y="668.5" width="5" height="12" fill="#fff" stroke="#d0142c" stroke-width="1"/><rect x="820" y="667" width="6" height="14" fill="#0c7a1c"/><rect x="827" y="672" width="6" height="9" fill="#0c7a1c"/><rect x="834" y="672" width="6" height="9" fill="#0c7a1c"/><rect x="841" y="674" width="6" height="7" fill="#0c7a1c"/><rect x="848.5" y="672.5" width="5" height="8" fill="#fff" stroke="#d0142c" stroke-width="1"/><rect x="855.5" y="670.5" width="5" height="10" fill="#fff" stroke="#d0142c" stroke-width="1"/><rect x="862" y="671" width="6" height="10" fill="#0c7a1c"/><rect x="869.5" y="666.5" width="5" height="14" fill="#fff" stroke="#d0142c" stroke-width="1"/><rect x="876.5" y="670.5" width="5" height="10" fill="#fff" stroke="#d0142c" stroke-width="1"/><rect x="883.5" y="671.5" width="5" height="9" fill="#fff" stroke="#d0142c" stroke-width="1"/><rect x="890" y="669" width="6" height="12" fill="#0c7a1c"/><rect x="897.5" y="669.5" width="5" height="11" fill="#fff" stroke="#d0142c" stroke-width="1"/><rect x="904" y="669" width="6" height="12" fill="#0c7a1c"/><rect x="911" y="672" width="6" height="9" fill="#0c7a1c"/><rect x="918" y="672" width="6" height="9" fill="#0c7a1c"/><rect x="925" y="675" width="6" height="6" fill="#0c7a1c"/><rect x="932.5" y="675.5" width="5" height="5" fill="#fff" stroke="#d0142c" stroke-width="1"/><rect x="939" y="671" width="6" height="10" fill="#0c7a1c"/><rect x="946.5" y="667.5" width="5" height="13" fill="#fff" stroke="#d0142c" stroke-width="1"/><rect x="953.5" y="665.5" width="5" height="15" fill="#fff" stroke="#d0142c" stroke-width="1"/><rect x="960.5" y="668.5" width="5" height="12" fill="#fff" stroke="#d0142c" stroke-width="1"/><rect x="967" y="666" width="6" height="15" fill="#0c7a1c"/><rect x="974" y="669" width="6" height="12" fill="#0c7a1c"/><rect x="981.5" y="667.5" width="5" height="13" fill="#fff" stroke="#d0142c" stroke-width="1"/><rect x="988.5" y="661.5" width="5" height="19" fill="#fff" stroke="#d0142c" stroke-width="1"/><rect x="995" y="666" width="6" height="15" fill="#0c7a1c"/><rect x="1002.5" y="668.5" width="5" height="12" fill="#fff" stroke="#d0142c" stroke-width="1"/><rect x="1009" y="667" width="6" height="14" fill="#0c7a1c"/><rect x="1016.5" y="670.5" width="5" height="10" fill="#fff" stroke="#d0142c" stroke-width="1"/><rect x="1023.5" y="669.5" width="5" height="11" fill="#fff" stroke="#d0142c" stroke-width="1"/><rect x="1030" y="664" width="6" height="17" fill="#0c7a1c"/><rect x="1037.5" y="668.5" width="5" height="12" fill="#fff" stroke="#d0142c" stroke-width="1"/><rect x="1044.5" y="662.5" width="5" height="18" fill="#fff" stroke="#d0142c" stroke-width="1"/><rect x="1051" y="661" width="6" height="20" fill="#0c7a1c"/><rect x="1058.5" y="658.5" width="5" height="22" fill="#fff" stroke="#d0142c" stroke-width="1"/><rect x="1065.5" y="663.5" width="5" height="17" fill="#fff" stroke="#d0142c" stroke-width="1"/><rect x="1072" y="661" width="6" height="20" fill="#0c7a1c"/><rect x="1079" y="665" width="6" height="16" fill="#0c7a1c"/><rect x="1086" y="657" width="6" height="24" fill="#0c7a1c"/><rect x="1093" y="670" width="6" height="11" fill="#0c7a1c"/><rect x="1100.5" y="661.5" width="5" height="19" fill="#fff" stroke="#d0142c" stroke-width="1"/><rect x="1107" y="664" width="6" height="17" fill="#0c7a1c"/><rect x="1114" y="664" width="6" height="17" fill="#0c7a1c"/><rect x="1121.5" y="663.5" width="5" height="17" fill="#fff" stroke="#d0142c" stroke-width="1"/><rect x="1128.5" y="655.5" width="5" height="25" fill="#fff" stroke="#d0142c" stroke-width="1"/><rect x="1135" y="657" width="6" height="24" fill="#0c7a1c"/><rect x="1142" y="678" width="6" height="3" fill="#0c7a1c"/><path d="M1102.5 143V681" stroke="#000" stroke-width="1" stroke-dasharray="3 3" fill="none"/></g><polyline fill="none" stroke="#b8202c" stroke-width="1" shape-rendering="crispEdges" points="333.2,160.0 341.0,170.5 346.0,172.0 357.5,182.0 370.0,188.0 380.0,195.8 390.0,206.0 404.0,217.0 411.0,218.8 419.0,223.0 425.0,231.0 432.5,242.0 442.5,247.5 451.0,253.0 457.5,262.5 467.5,272.0 477.5,281.0 485.0,285.8 497.5,294.0 507.5,297.5 525.0,306.5 542.5,317.0 550.0,319.5 562.5,327.5 572.5,330.8 582.5,337.0 600.0,343.8 612.5,349.2 625.0,349.2 635.0,350.5 645.0,348.8 655.0,350.0 670.0,356.2 682.5,362.0 695.0,363.2 707.5,366.8 717.5,368.2 745.0,368.2 755.0,370.5 767.5,371.8 780.0,371.0 789.0,368.2 800.0,369.5 817.5,370.8 832.5,375.0 852.5,378.8 870.0,380.0 877.5,379.2 892.5,381.2 920.0,380.5 957.5,381.2 975.0,384.2 995.0,385.8 1020.0,389.5 1032.5,391.2 1055.0,388.8 1065.0,389.5 1077.5,392.0 1087.5,390.8 1102.0,392.6 1114.0,394.0 1128.0,393.4 1142.0,393.6 1154.0,395.6 1164.0,398.6 1176.0,403.6 1200.0,408.0 1228.0,411.4 1254.0,416.0 1268.0,419.6 1288.0,422.6 1304.0,426.4 1328.0,429.6 1355.0,433.6"/><polyline fill="none" stroke="#b8202c" stroke-width="1" shape-rendering="crispEdges" points="460.0,602.5 465.0,600.8 472.5,596.2 480.0,594.2 500.0,592.5 510.0,595.5 522.5,597.5 535.0,597.5 543.8,595.5 551.0,597.5 565.0,595.5 571.0,596.8 580.0,593.0 600.0,590.0 612.5,585.5 622.5,586.8 635.0,585.0 650.0,588.2 657.5,586.8 670.0,580.8 682.5,578.2 691.0,580.0 700.0,578.8 717.5,578.2 725.0,580.0 745.0,580.0 753.8,578.2 761.0,580.0 767.5,578.8 780.0,580.5 790.0,584.5 805.0,583.8 817.5,584.5 842.5,580.5 852.5,582.5 865.0,582.5 880.0,584.5 900.0,581.8 910.0,581.8 930.0,583.8 955.0,585.5 980.0,583.8 1005.0,579.2 1030.0,576.2 1045.0,578.0 1065.0,578.0 1077.5,573.2 1090.0,572.0 1097.5,569.2 1115.3,567.4 1134.4,567.4 1140.0,568.3 1151.6,564.7 1166.0,560.3 1174.6,553.6 1188.0,551.1 1195.6,547.5 1214.7,543.5 1230.0,539.3 1245.3,533.5 1260.6,526.8 1272.0,524.9 1298.9,517.3 1310.3,513.1 1337.0,504.9 1355.3,502.4"/><polyline fill="none" stroke="#1c189c" stroke-width="1" shape-rendering="crispEdges" points="333.0,260.0 341.0,266.0 357.5,275.0 370.0,280.0 381.0,285.5 390.0,292.0 404.0,299.0 411.0,301.0 420.0,305.5 432.5,317.0 447.5,323.0 452.5,326.0 460.0,333.0 475.0,342.5 500.0,355.8 510.0,358.8 525.0,365.8 542.5,373.0 550.0,375.0 562.5,379.5 580.0,388.0 600.0,393.0 612.5,396.2 625.0,397.0 650.0,397.5 662.5,399.5 682.5,405.0 700.0,407.5 717.5,410.5 742.5,410.5 755.0,412.5 767.5,413.8 780.0,413.2 789.0,411.2 800.0,412.5 817.5,413.2 832.5,416.2 852.5,419.2 870.0,420.5 892.5,421.8 935.0,421.2 957.5,422.0 975.0,423.8 995.0,425.5 1020.0,428.0 1040.0,428.8 1055.0,427.0 1077.5,428.2 1114.0,428.6 1122.0,428.0 1148.0,428.4 1164.0,431.0 1178.0,434.4 1198.0,436.4 1228.0,438.0 1254.0,439.0 1268.0,441.0 1288.0,442.4 1304.0,444.4 1328.0,446.0 1355.0,447.4"/><polyline fill="none" stroke="#1c189c" stroke-width="1" shape-rendering="crispEdges" points="333.4,520.6 340.0,517.2 347.5,519.6 353.8,516.5 363.0,516.5 366.0,517.5 376.0,517.2 385.0,514.0 390.0,513.0 395.0,514.4 402.5,513.0 415.0,516.5 420.0,516.5 426.0,515.0 430.0,512.8 437.5,511.2 443.0,512.5 452.5,512.5 457.5,509.8 463.8,508.5 472.5,507.0 478.8,508.5 486.0,509.4 498.0,509.6 510.0,514.0 530.0,517.6 550.0,520.4 570.0,522.0 590.0,521.6 612.0,519.4 622.0,520.4 640.0,521.4 655.0,521.4 675.0,518.6 695.0,519.4 715.0,520.6 735.0,521.6 753.0,520.6 775.0,522.4 787.0,524.6 815.0,525.6 835.0,524.4 855.0,526.0 875.0,527.4 895.0,526.4 920.0,526.4 940.0,528.0 986.0,528.0 1010.0,525.6 1032.0,524.4 1044.0,526.4 1064.0,526.4 1080.0,523.6 1096.0,520.6 1107.6,519.6 1140.0,519.6 1156.0,517.0 1167.0,515.0 1174.6,512.1 1195.6,508.7 1230.0,503.9 1256.8,497.6 1291.2,492.4 1310.3,489.9 1325.6,486.3 1346.6,483.3 1355.3,483.3"/><polyline fill="none" stroke="#000" stroke-width="1" shape-rendering="crispEdges" points="333.0,373.0 400.0,390.6 430.0,400.0 458.0,408.0 475.0,413.8 490.0,420.0 507.5,423.8 532.5,433.2 550.0,436.2 575.0,443.8 600.0,448.2 625.0,450.0 655.0,451.6 675.0,452.5 695.0,454.4 725.0,457.0 735.0,458.0 775.0,459.6 815.0,461.0 855.0,464.6 875.0,465.6 927.0,466.6 960.0,468.0 1020.0,469.0 1088.0,468.6 1106.0,467.6 1198.0,467.0 1248.0,464.6 1308.0,463.0 1355.0,462.0"/><polyline fill="none" stroke="#1c189c" stroke-width="1" points="74.5,292 74.5,290.5 78,291 93.5,296"/><polyline fill="none" stroke="#1c189c" stroke-width="1" points="690.5,494.5 709,489.5"/><path d="M1099 156.5h7M1102.5 153v8" stroke="#000" stroke-width="1" fill="none" shape-rendering="crispEdges"/><path d="M1100 158h5l-2.5 3z" fill="#000"/><rect x="1.5" y="251.5" width="69" height="11" fill="#ff0000" stroke="#600000" stroke-width="1" shape-rendering="crispEdges"/><rect x="2" y="252" width="39" height="10" fill="#d81818" shape-rendering="crispEdges"/><rect x="1074" y="130" width="56" height="12" fill="#e01010" shape-rendering="crispEdges"/><text x="2" y="261.5" font-family='"Liberation Sans",sans-serif' font-size="12" fill="#fff" textLength="38" lengthAdjust="spacingAndGlyphs">22.7658</text><text x="1075" y="140.5" font-family='"Liberation Sans",sans-serif' font-size="11" fill="#fff" textLength="54" lengthAdjust="spacingAndGlyphs">2023-06-30</text><text x="72" y="140" font-family='"Liberation Sans",sans-serif' font-size="9.5" fill="#a0a0a0" textLength="20.5" lengthAdjust="spacingAndGlyphs">08-14</text><text x="131" y="140" font-family='"Liberation Sans",sans-serif' font-size="9.5" fill="#a0a0a0" textLength="20.5" lengthAdjust="spacingAndGlyphs">10-23</text><text x="201" y="140" font-family='"Liberation Sans",sans-serif' font-size="9.5" fill="#a0a0a0" textLength="20.5" lengthAdjust="spacingAndGlyphs">12-31</text><text x="271" y="140" font-family='"Liberation Sans",sans-serif' font-size="9.5" fill="#a0a0a0" textLength="20.5" lengthAdjust="spacingAndGlyphs">03-12</text><text x="341" y="140" font-family='"Liberation Sans",sans-serif' font-size="9.5" fill="#a0a0a0" textLength="20.5" lengthAdjust="spacingAndGlyphs">05-21</text><text x="411" y="140" font-family='"Liberation Sans",sans-serif' font-size="9.5" fill="#a0a0a0" textLength="20.5" lengthAdjust="spacingAndGlyphs">07-30</text><text x="481" y="140" font-family='"Liberation Sans",sans-serif' font-size="9.5" fill="#a0a0a0" textLength="20.5" lengthAdjust="spacingAndGlyphs">10-08</text><text x="551" y="140" font-family='"Liberation Sans",sans-serif' font-size="9.5" fill="#a0a0a0" textLength="20.5" lengthAdjust="spacingAndGlyphs">12-17</text><text x="621" y="140" font-family='"Liberation Sans",sans-serif' font-size="9.5" fill="#a0a0a0" textLength="20.5" lengthAdjust="spacingAndGlyphs">03-04</text><text x="690" y="140" font-family='"Liberation Sans",sans-serif' font-size="9.5" fill="#a0a0a0" textLength="20.5" lengthAdjust="spacingAndGlyphs">05-13</text><text x="760" y="140" font-family='"Liberation Sans",sans-serif' font-size="9.5" fill="#a0a0a0" textLength="20.5" lengthAdjust="spacingAndGlyphs">07-22</text><text x="830" y="140" font-family='"Liberation Sans",sans-serif' font-size="9.5" fill="#a0a0a0" textLength="20.5" lengthAdjust="spacingAndGlyphs">09-30</text><text x="900" y="140" font-family='"Liberation Sans",sans-serif' font-size="9.5" fill="#a0a0a0" textLength="20.5" lengthAdjust="spacingAndGlyphs">12-16</text><text x="970" y="140" font-family='"Liberation Sans",sans-serif' font-size="9.5" fill="#a0a0a0" textLength="20.5" lengthAdjust="spacingAndGlyphs">03-03</text><text x="1040" y="140" font-family='"Liberation Sans",sans-serif' font-size="9.5" fill="#a0a0a0" textLength="20.5" lengthAdjust="spacingAndGlyphs">05-12</text><text x="1181" y="140" font-family='"Liberation Sans",sans-serif' font-size="9.5" fill="#a0a0a0" textLength="20.5" lengthAdjust="spacingAndGlyphs">09-25</text><text x="1250" y="140" font-family='"Liberation Sans",sans-serif' font-size="9.5" fill="#a0a0a0" textLength="20.5" lengthAdjust="spacingAndGlyphs">12-04</text><text x="1321" y="140" font-family='"Liberation Sans",sans-serif' font-size="9.5" fill="#a0a0a0" textLength="20.5" lengthAdjust="spacingAndGlyphs">02-12</text><text x="3.5" y="146.5" font-family='"Liberation Serif","Noto Serif CJK SC",serif' font-size="13.5" fill="#0000c0" font-weight="500">周<tspan font-family="Liberation Mono" font-size="12">K</tspan>线</text><text x="70.5" y="155" font-family='"Liberation Serif","Noto Serif CJK SC",serif' font-size="13" fill="#000" font-weight="500" letter-spacing="0.5">极反通道</text><text transform="translate(141,155) scale(.893,1)" x="0" y="0" font-family='"Liberation Sans",sans-serif' font-size="12" fill="#c00000">Tp=14.0432</text><text transform="translate(219,155) scale(.893,1)" x="0" y="0" font-family='"Liberation Sans",sans-serif' font-size="12" fill="#000090">Up=11.7567</text><text transform="translate(298,155) scale(.893,1)" x="0" y="0" font-family='"Liberation Sans",sans-serif' font-size="12" fill="#000">Md=9.2214</text><text transform="translate(377.5,155) scale(.893,1)" x="0" y="0" font-family='"Liberation Sans",sans-serif' font-size="12" fill="#000090">Dn=5.8153</text><text transform="translate(456,155) scale(.893,1)" x="0" y="0" font-family='"Liberation Sans",sans-serif' font-size="12" fill="#c00000">Bt=2.6554</text><text x="1258" y="155" font-family='"Liberation Serif","Noto Serif CJK SC",serif' font-size="13" fill="#000090" font-weight="500"><tspan font-family="Liberation Mono" font-size="13" textLength="40" lengthAdjust="spacingAndGlyphs">688096</tspan><tspan x="1306.500" letter-spacing="0.3">京源环保</tspan></text><text x="94" y="306" font-family='"DejaVu Sans",sans-serif' font-size="11" fill="#2020c0">20.6714</text><text x="710" y="492" font-family='"DejaVu Sans",sans-serif' font-size="11" fill="#2020c0">7.5357</text><text x="68" y="600" text-anchor="end" font-family='"Liberation Serif","Noto Serif CJK SC",serif' font-size="12" fill="#404040" textLength="41" lengthAdjust="spacingAndGlyphs">0. 5521</text><text x="68" y="628" text-anchor="end" font-family='"Liberation Serif","Noto Serif CJK SC",serif' font-size="12" fill="#404040" textLength="35" lengthAdjust="spacingAndGlyphs">181232</text><text x="68" y="647" text-anchor="end" font-family='"Liberation Serif","Noto Serif CJK SC",serif' font-size="12" fill="#404040" textLength="35" lengthAdjust="spacingAndGlyphs">120821</text><text x="68" y="666" text-anchor="end" font-family='"Liberation Serif","Noto Serif CJK SC",serif' font-size="12" fill="#404040" textLength="29" lengthAdjust="spacingAndGlyphs">60411</text><text x="144.5" y="600" text-anchor="middle" font-family='"Liberation Sans",sans-serif' font-size="10.5" fill="#e01020">$</text><text x="760.5" y="600" text-anchor="middle" font-family='"Liberation Sans",sans-serif' font-size="10.5" fill="#e01020">$</text><text x="1082.5" y="600" text-anchor="middle" font-family='"Liberation Sans",sans-serif' font-size="10.5" fill="#e01020">$</text></svg>
<div class="a" style="left:0;top:665px;width:24px;height:15px;background:#f0f0f0;box-shadow:inset 1px 1px 0 #fff,inset -1px -1px 0 #808080"></div>
<svg class="a" style="left:6px;top:668px" width="12" height="10"><path d="M5.5 1L10 8.5H1z" fill="none" stroke="#404040"/></svg>
<div class="a" style="left:1336px;top:665px;width:23px;height:15px;background:#f0f0f0;box-shadow:inset 1px 1px 0 #fff,inset -1px -1px 0 #808080"></div>
<div class="t" style="left:1341px;top:667px;font-size:11px;color:#404040">→</div>
<div class="a" style="left:0;top:681px;width:1360px;height:2px;background:#808080"></div>
<div class="a" style="left:0;top:683px;width:1360px;height:1px;background:#c8c8c8"></div>
<div class="bar" style="top:684px;height:44px"></div>
<div class="ln" style="top:705px;background:#a0a0a0"></div><div class="ln" style="top:706px;background:#fff"></div>
<svg class="ic" style="left:4px;top:687px" viewBox="0 0 16 16"><rect x="0.5" y="0.5" width="15" height="13" fill="#fff" stroke="#000040" shape-rendering="crispEdges"/><rect x="1" y="1" width="14" height="3" fill="#1010b0" shape-rendering="crispEdges"/><g fill="#000040" shape-rendering="crispEdges"><rect x="2" y="5" width="2" height="1"/><rect x="5" y="5" width="2" height="1"/><rect x="8" y="5" width="2" height="1"/><rect x="11" y="5" width="2" height="1"/><rect x="2" y="7" width="2" height="1"/><rect x="5" y="7" width="2" height="1"/><rect x="8" y="7" width="2" height="1"/><rect x="11" y="7" width="2" height="1"/><rect x="2" y="9" width="2" height="1"/><rect x="5" y="9" width="2" height="1"/><rect x="8" y="9" width="2" height="1"/><rect x="11" y="9" width="2" height="1"/><rect x="2" y="11" width="2" height="1"/><rect x="5" y="11" width="2" height="1"/><rect x="8" y="11" width="2" height="1"/><rect x="11" y="11" width="2" height="1"/></g></svg>
<div class="a" style="left:23px;top:686px;width:16px;height:16px;border-radius:8px;background:#f00000"></div>
<div class="t" style="left:25px;top:688px;font:12px/12px 'Liberation Sans','Noto Sans CJK SC',sans-serif;color:#ffe000">沪</div>
<div class="a" style="left:0;top:685px;width:469px;height:20px;overflow:hidden"><div class="t" id="st1" style="left:43px;top:3px;font:11px/14px 'DejaVu Sans','Noto Sans CJK SC',sans-serif;color:#2e8b57;word-spacing:2px">3268.83 <span style="color:#107010">▼</span>-19.25 -0.59% 3930.57<span style="color:#800000;font-size:12px">亿</span></div>
<div class="t" id="st2" style="left:274px;top:3px;font:11px/14px 'DejaVu Sans','Noto Sans CJK SC',sans-serif;color:#2e8b57;word-spacing:2px">11145.03 <span style="color:#107010">▼</span>-93.03 -0.83% 4970.20</div></div>
<div class="a" style="left:253px;top:686px;width:16px;height:16px;border-radius:8px;background:#f00000"></div>
<div class="t" style="left:255px;top:688px;font:12px/12px 'Liberation Sans','Noto Sans CJK SC',sans-serif;color:#ffe000">深</div>
<div class="a" style="left:470px;top:685px;width:738px;height:19px;background:#f0f0f0"></div>
<div class="a" style="left:505px;top:686px;width:643px;height:17px;background:#cdcdcd"></div>
<svg class="a" style="left:487px;top:689px" width="10" height="11"><path d="M7 1L2.5 5.5L7 10" fill="none" stroke="#505050" stroke-width="1.8"/></svg>
<svg class="a" style="left:1164px;top:689px" width="10" height="11"><path d="M3 1L7.5 5.5L3 10" fill="none" stroke="#505050" stroke-width="1.8"/></svg>
<div class="a" style="left:469px;top:685px;width:1px;height:19px;background:#a0a0a0"></div>
<svg class="ic" style="left:1211px;top:686px" viewBox="0 0 16 16"><path d="M8 3L4.5 14h7z" fill="#fff" stroke="#000080"/><path d="M3 14.5h10M6 9.5h4" stroke="#000080"/><circle cx="8" cy="2" r="1" fill="#e01020"/></svg>
<div class="t" style="left:1229px;top:687px;font:13px/15px 'Liberation Sans','Noto Sans CJK SC',sans-serif">收688096分笔</div>
<div class="grip" style="left:3px;top:709px;height:16px"></div>
<div class="a" style="left:10px;top:708px;width:1348px;height:18px;box-shadow:inset 1px 1px 0 #a0a0a0,inset -1px -1px 0 #fff"></div>
<div class="t" style="left:13.6px;top:710px;font:12px/15px 'Liberation Sans','Noto Sans CJK SC',sans-serif">[五月十三]</div>
<div class="t" style="left:74px;top:710px;font:12px/15px 'Liberation Sans','Noto Sans CJK SC',sans-serif">时间:20230630</div>
<div class="t" style="left:161px;top:710px;font:12px/15px 'Liberation Sans','Noto Sans CJK SC',sans-serif">开:9.2500</div>
<div class="t" style="left:217px;top:710px;font:12px/15px 'Liberation Sans','Noto Sans CJK SC',sans-serif">高:9.9000</div>
<div class="t" style="left:275px;top:710px;font:12px/15px 'Liberation Sans','Noto Sans CJK SC',sans-serif">低:9.2000</div>
<div class="t" style="left:331.6px;top:710px;font:12px/15px 'Liberation Sans','Noto Sans CJK SC',sans-serif">收:9.8400</div>
<div class="t" style="left:388px;top:710px;font:12px/15px 'Liberation Sans','Noto Sans CJK SC',sans-serif">手:63845</div>
<div class="t" style="left:442.4px;top:710px;font:12px/15px 'Liberation Sans','Noto Sans CJK SC',sans-serif">额:61173832.00</div>
<div class="t" style="left:534px;top:710px;font:12px/15px 'Liberation Sans','Noto Sans CJK SC',sans-serif">换:0.00</div>
<div class="t" style="left:577.4px;top:710px;font:12px/15px 'Liberation Sans','Noto Sans CJK SC',sans-serif">涨:5.81</div>
<div class="t" style="left:620px;top:710px;font:12px/15px 'Liberation Sans','Noto Sans CJK SC',sans-serif">盘:0</div>
<div class="t" style="left:646.6px;top:710px;font:12px/15px 'Liberation Sans','Noto Sans CJK SC',sans-serif">标:22.7658</div>
<div class="ln" style="top:726px;background:#fff"></div><div class="ln" style="top:727px;background:#b0b0b0"></div>
<div class="a" style="left:0;top:728px;width:1360px;height:8px;background:#1d2a41;overflow:hidden"><div class="a" style="left:1355px;top:0;width:1px;height:8px;background:#8890a0"></div><div class="t" style="left:1256px;top:5px;font:12px/12px 'Liberation Sans','Noto Sans CJK SC',sans-serif;color:#fff">15:00</div></div>
</body></html>
